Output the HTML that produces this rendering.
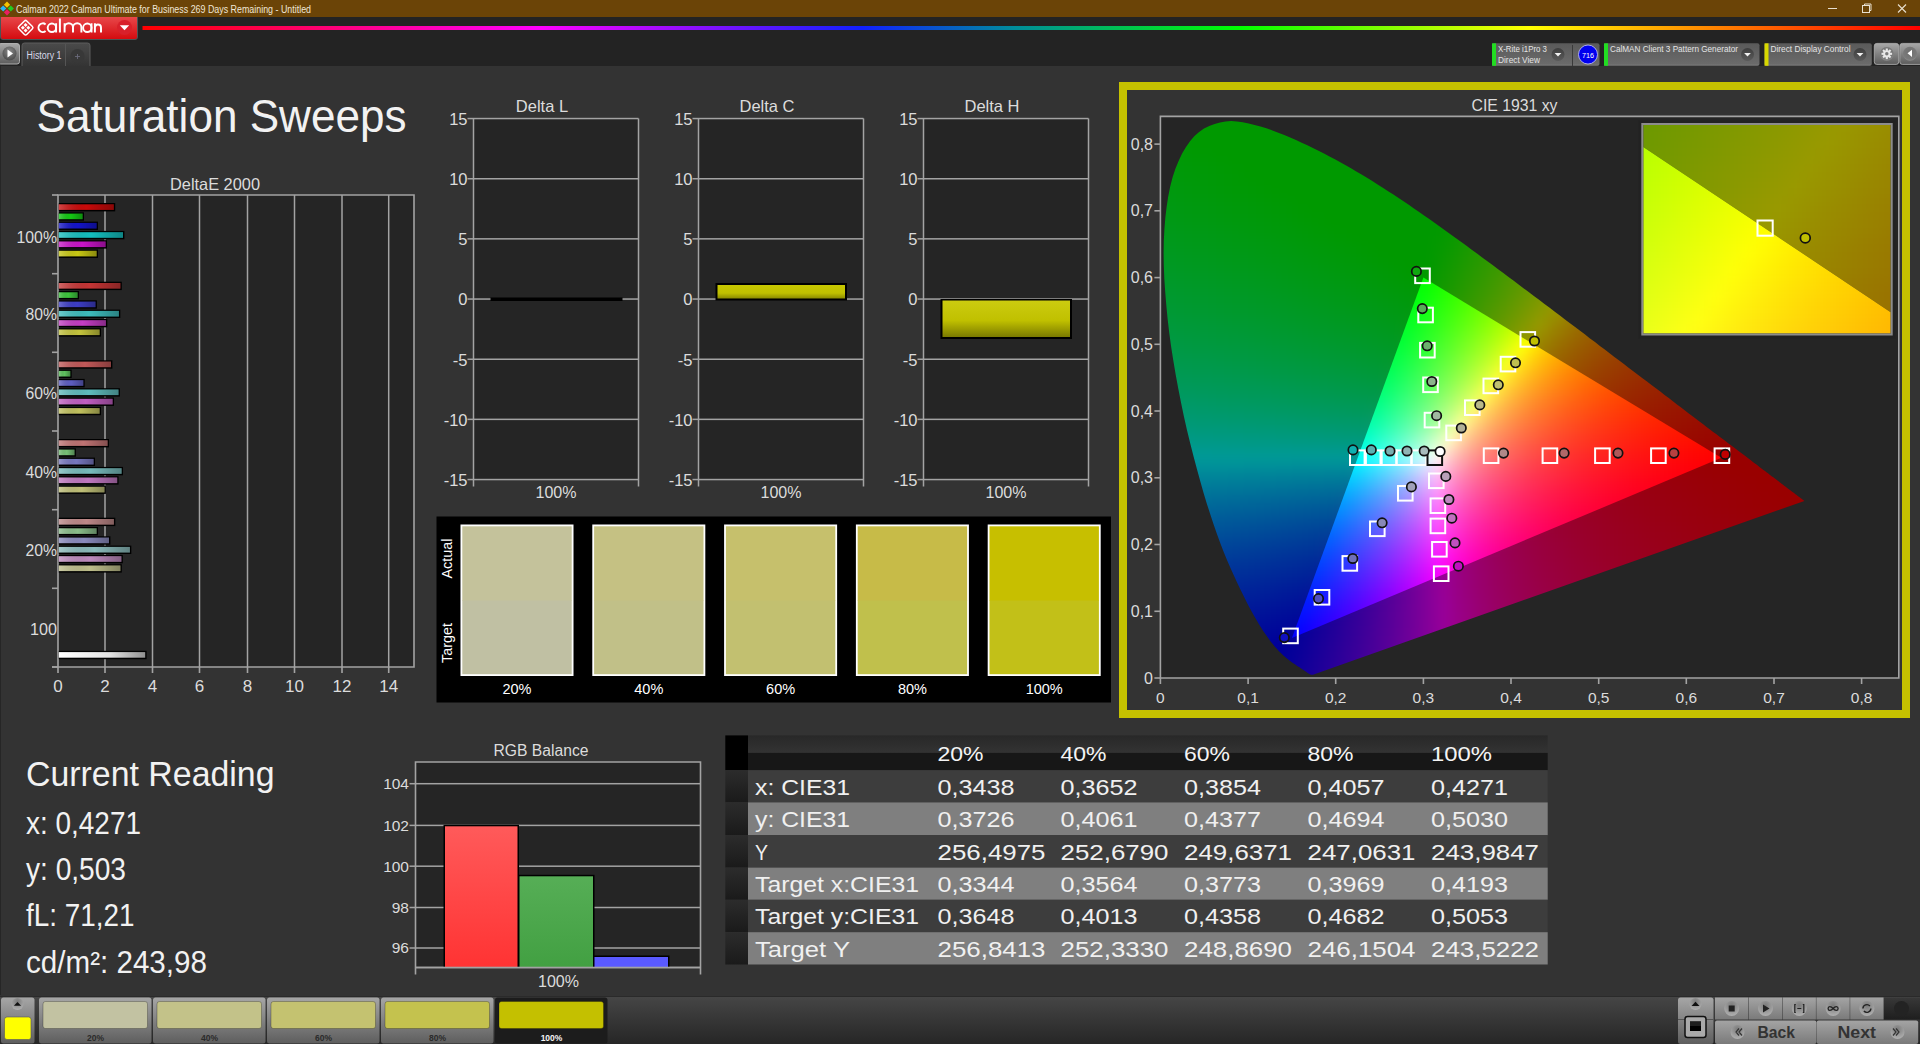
<!DOCTYPE html><html><head><meta charset="utf-8"><style>
html,body{margin:0;padding:0;width:1920px;height:1044px;overflow:hidden;background:#333;}
svg{position:absolute;left:0;top:0;font-family:"Liberation Sans",sans-serif;}
.cl{position:absolute;left:0;top:0;width:1920px;height:1044px;}
.bl{position:absolute;left:0;top:0;width:1920px;height:1044px;}
.bl i{position:absolute;display:block;}
</style></head><body>
<svg width="1920" height="1044" viewBox="0 0 1920 1044">
<defs>
<linearGradient id="redbtn" x1="0" y1="0" x2="0" y2="1"><stop offset="0" stop-color="#e8474a"/><stop offset="1" stop-color="#d40a0e"/></linearGradient>
<linearGradient id="rainbow" x1="0" y1="0" x2="1" y2="0">
<stop offset="0" stop-color="#ff0000"/><stop offset="0.223" stop-color="#ff00ff"/><stop offset="0.405" stop-color="#1020ff"/>
<stop offset="0.49" stop-color="#008c9c"/><stop offset="0.617" stop-color="#00ff00"/><stop offset="0.78" stop-color="#ffff00"/>
<stop offset="0.88" stop-color="#ff8800"/><stop offset="1" stop-color="#ff0000"/></linearGradient>
<linearGradient id="graybtn" x1="0" y1="0" x2="0" y2="1"><stop offset="0" stop-color="#a8a8a8"/><stop offset="1" stop-color="#5c5c5c"/></linearGradient>
<linearGradient id="selg" x1="0" y1="0" x2="0" y2="1"><stop offset="0" stop-color="#5a5a5a"/><stop offset="0.9" stop-color="#6a6a6a"/><stop offset="1" stop-color="#7a7a7a"/></linearGradient>
<radialGradient id="circ" cx="0.5" cy="0.35" r="0.6"><stop offset="0" stop-color="#8a8a8a"/><stop offset="1" stop-color="#505050"/></radialGradient>
<radialGradient id="circ3" cx="0.5" cy="0.4" r="0.6"><stop offset="0" stop-color="#6e6e6e"/><stop offset="0.8" stop-color="#7a7a7a"/><stop offset="1" stop-color="#8e8e8e"/></radialGradient>
<linearGradient id="tabg" x1="0" y1="0" x2="0" y2="1"><stop offset="0" stop-color="#4a4a4a"/><stop offset="1" stop-color="#343434"/></linearGradient>
<linearGradient id="ddg" x1="0" y1="0" x2="0" y2="1"><stop offset="0" stop-color="#3e3e3e"/><stop offset="1" stop-color="#5a5a5a"/></linearGradient>
<linearGradient id="barshade" x1="0" y1="0" x2="1" y2="0"><stop offset="0" stop-color="#fff" stop-opacity="0.25"/><stop offset="0.5" stop-color="#000" stop-opacity="0"/><stop offset="1" stop-color="#000" stop-opacity="0.3"/></linearGradient>
<linearGradient id="vshade" x1="0" y1="0" x2="0" y2="1"><stop offset="0" stop-color="#fff" stop-opacity="0.05"/><stop offset="0.6" stop-color="#000" stop-opacity="0"/><stop offset="1" stop-color="#000" stop-opacity="0.35"/></linearGradient>
</defs>
<defs>
<linearGradient id="whitebar" x1="0" y1="0" x2="1" y2="0"><stop offset="0" stop-color="#ffffff"/><stop offset="0.6" stop-color="#e0e0e0"/><stop offset="1" stop-color="#909090"/></linearGradient>
<linearGradient id="ybar" x1="0" y1="0" x2="0" y2="1"><stop offset="0" stop-color="#c8c800"/><stop offset="0.6" stop-color="#c0c000"/><stop offset="1" stop-color="#8a8a00"/></linearGradient>
<linearGradient id="ybar2" x1="0" y1="0" x2="0" y2="1"><stop offset="0" stop-color="#cccc10"/><stop offset="0.55" stop-color="#c0c000"/><stop offset="1" stop-color="#7a7a00"/></linearGradient>
</defs>
<defs>
<linearGradient id="rbar" x1="0" y1="0" x2="0" y2="1"><stop offset="0" stop-color="#ff5a5a"/><stop offset="1" stop-color="#ff3333"/></linearGradient>
<linearGradient id="gbar" x1="0" y1="0" x2="0" y2="1"><stop offset="0" stop-color="#56ae56"/><stop offset="1" stop-color="#42a042"/></linearGradient>
<linearGradient id="thead" x1="0" y1="0" x2="0" y2="1"><stop offset="0" stop-color="#282828"/><stop offset="1" stop-color="#333"/></linearGradient>
<linearGradient id="tleft" x1="0" y1="0" x2="0" y2="1"><stop offset="0" stop-color="#2c2c2c"/><stop offset="1" stop-color="#1a1a1a"/></linearGradient>
<linearGradient id="tbbg" x1="0" y1="0" x2="0" y2="1"><stop offset="0" stop-color="#464646"/><stop offset="1" stop-color="#262626"/></linearGradient>
<linearGradient id="tbbtn" x1="0" y1="0" x2="0" y2="1"><stop offset="0" stop-color="#a6a6a6"/><stop offset="1" stop-color="#5e5e5e"/></linearGradient>
<linearGradient id="tbbtn2" x1="0" y1="0" x2="0" y2="1"><stop offset="0" stop-color="#a4a4a4"/><stop offset="1" stop-color="#7a7a7a"/></linearGradient>
<linearGradient id="tbdark" x1="0" y1="0" x2="1" y2="0"><stop offset="0" stop-color="#262626"/><stop offset="1" stop-color="#3a3a3a"/></linearGradient>
<linearGradient id="darkr" x1="0" y1="0" x2="0" y2="1"><stop offset="0" stop-color="#383838"/><stop offset="1" stop-color="#1e1e1e"/></linearGradient>
<radialGradient id="circ2" cx="0.5" cy="0.3" r="0.7"><stop offset="0" stop-color="#7a7a7a"/><stop offset="1" stop-color="#b0b0b0"/></radialGradient>
</defs>
<rect x="0" y="66" width="1920" height="929" fill="#333333"/><rect x="0" y="66" width="1" height="929" fill="#262626"/>
<rect x="0" y="0" width="1920" height="17" fill="#6b4407"/>
<g transform="translate(7,8.5)"><rect x="-2.2" y="-6" width="4.4" height="4.4" fill="#f5c400" transform="rotate(45 0 -3.8)"/><rect x="-6" y="-2.2" width="4.4" height="4.4" fill="#29b6f6" transform="rotate(45 -3.8 0)"/><rect x="1.6" y="-2.2" width="4.4" height="4.4" fill="#22cc22" transform="rotate(45 3.8 0)"/><rect x="-2.2" y="1.6" width="4.4" height="4.4" fill="#e91e63" transform="rotate(45 0 3.8)"/></g>
<text x="16" y="12.5" font-size="10" fill="#efe6d6" text-anchor="start" textLength="295" lengthAdjust="spacingAndGlyphs">Calman 2022 Calman Ultimate for Business 269 Days Remaining  - Untitled</text>
<rect x="1828" y="8" width="9" height="1" fill="#e8e0d0"/>
<rect x="1862.5" y="5.5" width="7" height="7" fill="none" stroke="#e8e0d0" stroke-width="1"/><path d="M1864.5 5.5v-1.5h6.5v6.5h-1.5" fill="none" stroke="#e8e0d0" stroke-width="1"/>
<path d="M1898 4.5l8 8M1906 4.5l-8 8" stroke="#e8e0d0" stroke-width="1.1"/>
<rect x="0" y="17" width="1920" height="49" fill="#232323"/>
<path d="M0.5 17H137.5V37a2.5 2.5 0 0 1-2.5 2.5H3a2.5 2.5 0 0 1-2.5-2.5Z" fill="url(#redbtn)"/><path d="M137.5 17V37a2.5 2.5 0 0 1-2.5 2.5H3a2.5 2.5 0 0 1-2.5-2.5V17" fill="none" stroke="#4b5456" stroke-width="1"/>
<g transform="translate(25.6,27.7) rotate(45)" fill="none" stroke="#fff" stroke-width="1.5"><rect x="-5.6" y="-5.6" width="11.2" height="11.2" rx="1.6"/></g>
<g transform="translate(25.6,27.7) rotate(45)" fill="#fff"><rect x="-3.4" y="-3.4" width="2.9" height="2.9"/><rect x="0.5" y="-3.4" width="2.9" height="2.9"/><rect x="-3.4" y="0.5" width="2.9" height="2.9"/><rect x="0.5" y="0.5" width="2.9" height="2.9"/></g>
<g fill="none" stroke="#fff" stroke-width="1.95"><path d="M45.6 24.4A4.3 4.3 0 1 0 45.6 30.9M56.1 23.2V32.6M59.9 18.4V32.6M64.6 32.6V23.2M64.6 27.4A4.2 4.2 0 0 1 73 27.4V32.6M73 27.4A4.2 4.2 0 0 1 81.4 27.4V32.6M91.5 23.2V32.6M94.9 32.6V23.2M94.9 27.6A3.05 3.05 0 0 1 101 27.6V32.6"/><circle cx="51.9" cy="27.8" r="4.2"/><circle cx="87.3" cy="27.8" r="4.2"/></g>
<circle cx="124.5" cy="27.5" r="7.5" fill="#d8202a"/><path d="M119.8 25.2h9.4l-4.7 5z" fill="#fff"/>
<rect x="142.5" y="26" width="1777.5" height="4" fill="url(#rainbow)"/>
<rect x="-2" y="43.5" width="21.5" height="20.5" rx="2.5" fill="url(#graybtn)" stroke="#b8b8b8" stroke-width="0.9"/>
<circle cx="9.5" cy="53.5" r="7" fill="url(#circ)"/><path d="M7.5 49.5v8l5.5-4z" fill="#fff"/>
<path d="M22 66v-20.5a2.5 2.5 0 0 1 2.5-2.5h63a2.5 2.5 0 0 1 2.5 2.5v20.5" fill="url(#tabg)" stroke="#5c5c5c" stroke-width="1"/>
<rect x="65" y="44" width="1" height="22" fill="#555"/>
<text x="26.5" y="59" font-size="10" fill="#d8d8e8" text-anchor="start" textLength="35" lengthAdjust="spacingAndGlyphs">History 1</text>
<circle cx="77.5" cy="56" r="7" fill="#383838"/><path d="M75 56.5h5M77.5 54v5" stroke="#6a6a7a" stroke-width="0.9"/>
<rect x="1492" y="43.3" width="107.5" height="22.5" rx="2" fill="url(#selg)"/><rect x="1492" y="43.3" width="4" height="22.5" fill="#22dd22"/><text x="1498" y="52.0" font-size="9" fill="#e4e4e4" text-anchor="start" textLength="49" lengthAdjust="spacingAndGlyphs">X-Rite i1Pro 3</text><text x="1498" y="62.5" font-size="9" fill="#e4e4e4" text-anchor="start" textLength="42" lengthAdjust="spacingAndGlyphs">Direct View</text><circle cx="1558" cy="54.5" r="6.5" fill="url(#ddg)"/><path d="M1554.6 53h6.8l-3.4 3.6z" fill="#f0f0f0"/>
<rect x="1572" y="45" width="1" height="21" fill="#3a3a3a"/>
<circle cx="1588" cy="54.5" r="9.5" fill="#0000ee" stroke="#c8c8ff" stroke-width="0.8"/>
<text x="1588" y="58" font-size="8" fill="#ffffff" text-anchor="middle" textLength="12" lengthAdjust="spacingAndGlyphs">716</text>
<rect x="1604" y="43.3" width="155.5" height="22.5" rx="2" fill="url(#selg)"/><rect x="1604" y="43.3" width="4" height="22.5" fill="#22dd22"/><text x="1610" y="52.0" font-size="9" fill="#e4e4e4" text-anchor="start" textLength="128" lengthAdjust="spacingAndGlyphs">CalMAN Client 3 Pattern Generator</text><circle cx="1747.5" cy="54.5" r="6.5" fill="url(#ddg)"/><path d="M1744.1 53h6.8l-3.4 3.6z" fill="#f0f0f0"/>
<rect x="1764.5" y="43.3" width="107.29999999999995" height="22.5" rx="2" fill="url(#selg)"/><rect x="1764.5" y="43.3" width="4" height="22.5" fill="#d8d800"/><text x="1770.5" y="52.0" font-size="9" fill="#e4e4e4" text-anchor="start" textLength="80" lengthAdjust="spacingAndGlyphs">Direct Display Control</text><circle cx="1860" cy="54.5" r="6.5" fill="url(#ddg)"/><path d="M1856.6 53h6.8l-3.4 3.6z" fill="#f0f0f0"/>
<rect x="1874.3" y="43.4" width="24.4" height="21" rx="2.5" fill="url(#graybtn)" stroke="#b4b4b4" stroke-width="0.8"/>
<circle cx="1886.8" cy="53.8" r="6.9" fill="url(#circ3)"/>
<g transform="translate(1886.8,53.8)" fill="#e8e8e8"><circle r="3.6"/><rect x="-1.05" y="-5.3" width="2.1" height="2.4" transform="rotate(0)"/><rect x="-1.05" y="-5.3" width="2.1" height="2.4" transform="rotate(45)"/><rect x="-1.05" y="-5.3" width="2.1" height="2.4" transform="rotate(90)"/><rect x="-1.05" y="-5.3" width="2.1" height="2.4" transform="rotate(135)"/><rect x="-1.05" y="-5.3" width="2.1" height="2.4" transform="rotate(180)"/><rect x="-1.05" y="-5.3" width="2.1" height="2.4" transform="rotate(225)"/><rect x="-1.05" y="-5.3" width="2.1" height="2.4" transform="rotate(270)"/><rect x="-1.05" y="-5.3" width="2.1" height="2.4" transform="rotate(315)"/><circle r="1.7" fill="#7a7a7a"/></g>
<rect x="1899.8" y="43.4" width="24.4" height="21" rx="2.5" fill="url(#graybtn)" stroke="#b4b4b4" stroke-width="0.8"/>
<circle cx="1910" cy="53.8" r="7" fill="url(#circ3)"/><path d="M1912 49.7v7.3l-4.5-3.8z" fill="#fff"/>
<text x="36.5" y="132" font-size="46.5" fill="#f2f2f2" text-anchor="start" textLength="370" lengthAdjust="spacingAndGlyphs">Saturation Sweeps</text>
<text x="215" y="189.5" font-size="16.5" fill="#dcdcdc" text-anchor="middle" textLength="90" lengthAdjust="spacingAndGlyphs">DeltaE 2000</text>
<rect x="58" y="195" width="356" height="472" fill="#252525"/>
<rect x="104.25" y="195" width="1.5" height="472" fill="#a3a3a3"/>
<rect x="151.75" y="195" width="1.5" height="472" fill="#a3a3a3"/>
<rect x="198.75" y="195" width="1.5" height="472" fill="#a3a3a3"/>
<rect x="246.75" y="195" width="1.5" height="472" fill="#a3a3a3"/>
<rect x="293.75" y="195" width="1.5" height="472" fill="#a3a3a3"/>
<rect x="341.25" y="195" width="1.5" height="472" fill="#a3a3a3"/>
<rect x="387.95" y="195" width="1.5" height="472" fill="#a3a3a3"/>
<path d="M58 667V195H414V667H52" fill="none" stroke="#a3a3a3" stroke-width="1.6"/>
<rect x="52" y="194.2" width="6" height="1.6" fill="#a3a3a3"/>
<rect x="52" y="272.9" width="6" height="1.6" fill="#a3a3a3"/>
<rect x="52" y="351.5" width="6" height="1.6" fill="#a3a3a3"/>
<rect x="52" y="430.2" width="6" height="1.6" fill="#a3a3a3"/>
<rect x="52" y="508.9" width="6" height="1.6" fill="#a3a3a3"/>
<rect x="52" y="587.5" width="6" height="1.6" fill="#a3a3a3"/>
<rect x="52" y="666.2" width="6" height="1.6" fill="#a3a3a3"/>
<rect x="57.2" y="667" width="1.6" height="6" fill="#a3a3a3"/>
<text x="58" y="692" font-size="17" fill="#dcdcdc" text-anchor="middle">0</text>
<rect x="104.2" y="667" width="1.6" height="6" fill="#a3a3a3"/>
<text x="105" y="692" font-size="17" fill="#dcdcdc" text-anchor="middle">2</text>
<rect x="151.7" y="667" width="1.6" height="6" fill="#a3a3a3"/>
<text x="152.5" y="692" font-size="17" fill="#dcdcdc" text-anchor="middle">4</text>
<rect x="198.7" y="667" width="1.6" height="6" fill="#a3a3a3"/>
<text x="199.5" y="692" font-size="17" fill="#dcdcdc" text-anchor="middle">6</text>
<rect x="246.7" y="667" width="1.6" height="6" fill="#a3a3a3"/>
<text x="247.5" y="692" font-size="17" fill="#dcdcdc" text-anchor="middle">8</text>
<rect x="293.7" y="667" width="1.6" height="6" fill="#a3a3a3"/>
<text x="294.5" y="692" font-size="17" fill="#dcdcdc" text-anchor="middle">10</text>
<rect x="341.2" y="667" width="1.6" height="6" fill="#a3a3a3"/>
<text x="342" y="692" font-size="17" fill="#dcdcdc" text-anchor="middle">12</text>
<rect x="387.9" y="667" width="1.6" height="6" fill="#a3a3a3"/>
<text x="388.7" y="692" font-size="17" fill="#dcdcdc" text-anchor="middle">14</text>
<text x="57" y="242.5" font-size="16.7" fill="#dcdcdc" text-anchor="end" textLength="40.5" lengthAdjust="spacingAndGlyphs">100%</text>
<text x="57" y="320" font-size="16.7" fill="#dcdcdc" text-anchor="end" textLength="31.5" lengthAdjust="spacingAndGlyphs">80%</text>
<text x="57" y="399" font-size="16.7" fill="#dcdcdc" text-anchor="end" textLength="31.5" lengthAdjust="spacingAndGlyphs">60%</text>
<text x="57" y="478" font-size="16.7" fill="#dcdcdc" text-anchor="end" textLength="31.5" lengthAdjust="spacingAndGlyphs">40%</text>
<text x="57" y="556" font-size="16.7" fill="#dcdcdc" text-anchor="end" textLength="31.5" lengthAdjust="spacingAndGlyphs">20%</text>
<text x="57" y="635" font-size="16.7" fill="#dcdcdc" text-anchor="end" textLength="27" lengthAdjust="spacingAndGlyphs">100</text>
<rect x="58.8" y="203.0" width="56.4" height="8.4" fill="#000"/>
<rect x="58.8" y="204.3" width="55.0" height="5.6" fill="rgb(200, 10, 10)"/>
<rect x="58.8" y="204.3" width="55.0" height="5.6" fill="url(#barshade)"/>
<rect x="58.8" y="212.3" width="25.2" height="8.4" fill="#000"/>
<rect x="58.8" y="213.6" width="23.8" height="5.6" fill="rgb(20, 200, 20)"/>
<rect x="58.8" y="213.6" width="23.8" height="5.6" fill="url(#barshade)"/>
<rect x="58.8" y="221.6" width="39.2" height="8.4" fill="#000"/>
<rect x="58.8" y="222.9" width="37.8" height="5.6" fill="rgb(20, 20, 200)"/>
<rect x="58.8" y="222.9" width="37.8" height="5.6" fill="url(#barshade)"/>
<rect x="58.8" y="230.9" width="65.6" height="8.4" fill="#000"/>
<rect x="58.8" y="232.2" width="64.2" height="5.6" fill="rgb(20, 190, 190)"/>
<rect x="58.8" y="232.2" width="64.2" height="5.6" fill="url(#barshade)"/>
<rect x="58.8" y="240.2" width="48.2" height="8.4" fill="#000"/>
<rect x="58.8" y="241.5" width="46.8" height="5.6" fill="rgb(200, 20, 200)"/>
<rect x="58.8" y="241.5" width="46.8" height="5.6" fill="url(#barshade)"/>
<rect x="58.8" y="249.5" width="39.2" height="8.4" fill="#000"/>
<rect x="58.8" y="250.8" width="37.8" height="5.6" fill="rgb(200, 200, 20)"/>
<rect x="58.8" y="250.8" width="37.8" height="5.6" fill="url(#barshade)"/>
<rect x="58.8" y="281.7" width="63.0" height="8.4" fill="#000"/>
<rect x="58.8" y="283.0" width="61.6" height="5.6" fill="rgb(196, 53, 53)"/>
<rect x="58.8" y="283.0" width="61.6" height="5.6" fill="url(#barshade)"/>
<rect x="58.8" y="291.0" width="20.2" height="8.4" fill="#000"/>
<rect x="58.8" y="292.3" width="18.8" height="5.6" fill="rgb(61, 196, 61)"/>
<rect x="58.8" y="292.3" width="18.8" height="5.6" fill="url(#barshade)"/>
<rect x="58.8" y="300.3" width="38.1" height="8.4" fill="#000"/>
<rect x="58.8" y="301.6" width="36.7" height="5.6" fill="rgb(61, 61, 196)"/>
<rect x="58.8" y="301.6" width="36.7" height="5.6" fill="url(#barshade)"/>
<rect x="58.8" y="309.6" width="61.5" height="8.4" fill="#000"/>
<rect x="58.8" y="310.9" width="60.1" height="5.6" fill="rgb(61, 188, 188)"/>
<rect x="58.8" y="310.9" width="60.1" height="5.6" fill="url(#barshade)"/>
<rect x="58.8" y="318.9" width="48.5" height="8.4" fill="#000"/>
<rect x="58.8" y="320.2" width="47.1" height="5.6" fill="rgb(196, 61, 196)"/>
<rect x="58.8" y="320.2" width="47.1" height="5.6" fill="url(#barshade)"/>
<rect x="58.8" y="328.2" width="42.2" height="8.4" fill="#000"/>
<rect x="58.8" y="329.5" width="40.8" height="5.6" fill="rgb(196, 196, 61)"/>
<rect x="58.8" y="329.5" width="40.8" height="5.6" fill="url(#barshade)"/>
<rect x="58.8" y="360.3" width="53.6" height="8.4" fill="#000"/>
<rect x="58.8" y="361.6" width="52.2" height="5.6" fill="rgb(193, 88, 88)"/>
<rect x="58.8" y="361.6" width="52.2" height="5.6" fill="url(#barshade)"/>
<rect x="58.8" y="369.6" width="12.9" height="8.4" fill="#000"/>
<rect x="58.8" y="370.9" width="11.5" height="5.6" fill="rgb(94, 193, 94)"/>
<rect x="58.8" y="370.9" width="11.5" height="5.6" fill="url(#barshade)"/>
<rect x="58.8" y="378.9" width="25.9" height="8.4" fill="#000"/>
<rect x="58.8" y="380.2" width="24.5" height="5.6" fill="rgb(94, 94, 193)"/>
<rect x="58.8" y="380.2" width="24.5" height="5.6" fill="url(#barshade)"/>
<rect x="58.8" y="388.2" width="61.1" height="8.4" fill="#000"/>
<rect x="58.8" y="389.5" width="59.7" height="5.6" fill="rgb(94, 187, 187)"/>
<rect x="58.8" y="389.5" width="59.7" height="5.6" fill="url(#barshade)"/>
<rect x="58.8" y="397.5" width="55.2" height="8.4" fill="#000"/>
<rect x="58.8" y="398.8" width="53.8" height="5.6" fill="rgb(193, 94, 193)"/>
<rect x="58.8" y="398.8" width="53.8" height="5.6" fill="url(#barshade)"/>
<rect x="58.8" y="406.8" width="42.2" height="8.4" fill="#000"/>
<rect x="58.8" y="408.1" width="40.8" height="5.6" fill="rgb(193, 193, 94)"/>
<rect x="58.8" y="408.1" width="40.8" height="5.6" fill="url(#barshade)"/>
<rect x="58.8" y="439.0" width="50.2" height="8.4" fill="#000"/>
<rect x="58.8" y="440.3" width="48.8" height="5.6" fill="rgb(191, 115, 115)"/>
<rect x="58.8" y="440.3" width="48.8" height="5.6" fill="url(#barshade)"/>
<rect x="58.8" y="448.3" width="17.1" height="8.4" fill="#000"/>
<rect x="58.8" y="449.6" width="15.7" height="5.6" fill="rgb(119, 191, 119)"/>
<rect x="58.8" y="449.6" width="15.7" height="5.6" fill="url(#barshade)"/>
<rect x="58.8" y="457.6" width="36.2" height="8.4" fill="#000"/>
<rect x="58.8" y="458.9" width="34.8" height="5.6" fill="rgb(119, 119, 191)"/>
<rect x="58.8" y="458.9" width="34.8" height="5.6" fill="url(#barshade)"/>
<rect x="58.8" y="466.9" width="64.2" height="8.4" fill="#000"/>
<rect x="58.8" y="468.2" width="62.8" height="5.6" fill="rgb(119, 187, 187)"/>
<rect x="58.8" y="468.2" width="62.8" height="5.6" fill="url(#barshade)"/>
<rect x="58.8" y="476.2" width="59.8" height="8.4" fill="#000"/>
<rect x="58.8" y="477.5" width="58.4" height="5.6" fill="rgb(191, 119, 191)"/>
<rect x="58.8" y="477.5" width="58.4" height="5.6" fill="url(#barshade)"/>
<rect x="58.8" y="485.5" width="47.1" height="8.4" fill="#000"/>
<rect x="58.8" y="486.8" width="45.7" height="5.6" fill="rgb(191, 191, 119)"/>
<rect x="58.8" y="486.8" width="45.7" height="5.6" fill="url(#barshade)"/>
<rect x="58.8" y="517.7" width="56.5" height="8.4" fill="#000"/>
<rect x="58.8" y="519.0" width="55.1" height="5.6" fill="rgb(189, 136, 136)"/>
<rect x="58.8" y="519.0" width="55.1" height="5.6" fill="url(#barshade)"/>
<rect x="58.8" y="527.0" width="39.2" height="8.4" fill="#000"/>
<rect x="58.8" y="528.3" width="37.8" height="5.6" fill="rgb(138, 189, 138)"/>
<rect x="58.8" y="528.3" width="37.8" height="5.6" fill="url(#barshade)"/>
<rect x="58.8" y="536.3" width="51.6" height="8.4" fill="#000"/>
<rect x="58.8" y="537.6" width="50.2" height="5.6" fill="rgb(138, 138, 189)"/>
<rect x="58.8" y="537.6" width="50.2" height="5.6" fill="url(#barshade)"/>
<rect x="58.8" y="545.6" width="72.5" height="8.4" fill="#000"/>
<rect x="58.8" y="546.9" width="71.1" height="5.6" fill="rgb(138, 186, 186)"/>
<rect x="58.8" y="546.9" width="71.1" height="5.6" fill="url(#barshade)"/>
<rect x="58.8" y="554.9" width="64.0" height="8.4" fill="#000"/>
<rect x="58.8" y="556.2" width="62.6" height="5.6" fill="rgb(189, 138, 189)"/>
<rect x="58.8" y="556.2" width="62.6" height="5.6" fill="url(#barshade)"/>
<rect x="58.8" y="564.2" width="63.0" height="8.4" fill="#000"/>
<rect x="58.8" y="565.5" width="61.6" height="5.6" fill="rgb(189, 189, 138)"/>
<rect x="58.8" y="565.5" width="61.6" height="5.6" fill="url(#barshade)"/>
<rect x="58.8" y="650.8" width="87.8" height="8.4" fill="#000"/>
<rect x="58.8" y="652.1" width="86.4" height="5.6" fill="url(#whitebar)"/>
<text x="542.0" y="111.5" font-size="16.5" fill="#dcdcdc" text-anchor="middle">Delta L</text>
<rect x="473.5" y="118.5" width="165.0" height="361.0" fill="#252525"/>
<rect x="467.5" y="117.8" width="171.0" height="1.5" fill="#a3a3a3"/>
<text x="467.5" y="124.8" font-size="16.5" fill="#dcdcdc" text-anchor="end">15</text>
<rect x="467.5" y="178.0" width="171.0" height="1.5" fill="#a3a3a3"/>
<text x="467.5" y="185.0" font-size="16.5" fill="#dcdcdc" text-anchor="end">10</text>
<rect x="467.5" y="238.1" width="171.0" height="1.5" fill="#a3a3a3"/>
<text x="467.5" y="245.1" font-size="16.5" fill="#dcdcdc" text-anchor="end">5</text>
<rect x="467.5" y="298.3" width="171.0" height="1.5" fill="#a3a3a3"/>
<text x="467.5" y="305.3" font-size="16.5" fill="#dcdcdc" text-anchor="end">0</text>
<rect x="467.5" y="358.5" width="171.0" height="1.5" fill="#a3a3a3"/>
<text x="467.5" y="365.5" font-size="16.5" fill="#dcdcdc" text-anchor="end">-5</text>
<rect x="467.5" y="418.6" width="171.0" height="1.5" fill="#a3a3a3"/>
<text x="467.5" y="425.6" font-size="16.5" fill="#dcdcdc" text-anchor="end">-10</text>
<rect x="467.5" y="478.8" width="171.0" height="1.5" fill="#a3a3a3"/>
<text x="467.5" y="485.8" font-size="16.5" fill="#dcdcdc" text-anchor="end">-15</text>
<rect x="472.75" y="118.5" width="1.5" height="368.0" fill="#a3a3a3"/>
<rect x="637.75" y="118.5" width="1.5" height="368.0" fill="#a3a3a3"/>
<text x="556.0" y="498" font-size="16.5" fill="#dcdcdc" text-anchor="middle" textLength="41" lengthAdjust="spacingAndGlyphs">100%</text>
<rect x="490.5" y="297.5" width="132" height="3.5" fill="#000"/>
<text x="767.0" y="111.5" font-size="16.5" fill="#dcdcdc" text-anchor="middle">Delta C</text>
<rect x="698.5" y="118.5" width="165.0" height="361.0" fill="#252525"/>
<rect x="692.5" y="117.8" width="171.0" height="1.5" fill="#a3a3a3"/>
<text x="692.5" y="124.8" font-size="16.5" fill="#dcdcdc" text-anchor="end">15</text>
<rect x="692.5" y="178.0" width="171.0" height="1.5" fill="#a3a3a3"/>
<text x="692.5" y="185.0" font-size="16.5" fill="#dcdcdc" text-anchor="end">10</text>
<rect x="692.5" y="238.1" width="171.0" height="1.5" fill="#a3a3a3"/>
<text x="692.5" y="245.1" font-size="16.5" fill="#dcdcdc" text-anchor="end">5</text>
<rect x="692.5" y="298.3" width="171.0" height="1.5" fill="#a3a3a3"/>
<text x="692.5" y="305.3" font-size="16.5" fill="#dcdcdc" text-anchor="end">0</text>
<rect x="692.5" y="358.5" width="171.0" height="1.5" fill="#a3a3a3"/>
<text x="692.5" y="365.5" font-size="16.5" fill="#dcdcdc" text-anchor="end">-5</text>
<rect x="692.5" y="418.6" width="171.0" height="1.5" fill="#a3a3a3"/>
<text x="692.5" y="425.6" font-size="16.5" fill="#dcdcdc" text-anchor="end">-10</text>
<rect x="692.5" y="478.8" width="171.0" height="1.5" fill="#a3a3a3"/>
<text x="692.5" y="485.8" font-size="16.5" fill="#dcdcdc" text-anchor="end">-15</text>
<rect x="697.75" y="118.5" width="1.5" height="368.0" fill="#a3a3a3"/>
<rect x="862.75" y="118.5" width="1.5" height="368.0" fill="#a3a3a3"/>
<text x="781.0" y="498" font-size="16.5" fill="#dcdcdc" text-anchor="middle" textLength="41" lengthAdjust="spacingAndGlyphs">100%</text>
<rect x="715.5" y="283" width="131.5" height="17.5" fill="#000"/><rect x="717.5" y="285" width="127.5" height="13.5" fill="url(#ybar)"/>
<text x="992.0" y="111.5" font-size="16.5" fill="#dcdcdc" text-anchor="middle">Delta H</text>
<rect x="923.5" y="118.5" width="165.0" height="361.0" fill="#252525"/>
<rect x="917.5" y="117.8" width="171.0" height="1.5" fill="#a3a3a3"/>
<text x="917.5" y="124.8" font-size="16.5" fill="#dcdcdc" text-anchor="end">15</text>
<rect x="917.5" y="178.0" width="171.0" height="1.5" fill="#a3a3a3"/>
<text x="917.5" y="185.0" font-size="16.5" fill="#dcdcdc" text-anchor="end">10</text>
<rect x="917.5" y="238.1" width="171.0" height="1.5" fill="#a3a3a3"/>
<text x="917.5" y="245.1" font-size="16.5" fill="#dcdcdc" text-anchor="end">5</text>
<rect x="917.5" y="298.3" width="171.0" height="1.5" fill="#a3a3a3"/>
<text x="917.5" y="305.3" font-size="16.5" fill="#dcdcdc" text-anchor="end">0</text>
<rect x="917.5" y="358.5" width="171.0" height="1.5" fill="#a3a3a3"/>
<text x="917.5" y="365.5" font-size="16.5" fill="#dcdcdc" text-anchor="end">-5</text>
<rect x="917.5" y="418.6" width="171.0" height="1.5" fill="#a3a3a3"/>
<text x="917.5" y="425.6" font-size="16.5" fill="#dcdcdc" text-anchor="end">-10</text>
<rect x="917.5" y="478.8" width="171.0" height="1.5" fill="#a3a3a3"/>
<text x="917.5" y="485.8" font-size="16.5" fill="#dcdcdc" text-anchor="end">-15</text>
<rect x="922.75" y="118.5" width="1.5" height="368.0" fill="#a3a3a3"/>
<rect x="1087.75" y="118.5" width="1.5" height="368.0" fill="#a3a3a3"/>
<text x="1006.0" y="498" font-size="16.5" fill="#dcdcdc" text-anchor="middle" textLength="41" lengthAdjust="spacingAndGlyphs">100%</text>
<rect x="940.5" y="299" width="131.5" height="40" fill="#000"/><rect x="942.5" y="300.5" width="127.5" height="36.5" fill="url(#ybar2)"/>
<rect x="436.5" y="516.5" width="674.5" height="186" fill="#000"/>
<rect x="460.5" y="524.5" width="113" height="151.5" fill="#fff"/>
<rect x="462.3" y="526.3" width="109.4" height="74.7" fill="#c4c29b"/>
<rect x="462.3" y="600.5" width="109.4" height="73.7" fill="#c0c0a3"/>
<text x="517.0" y="693.5" font-size="14.5" fill="#ffffff" text-anchor="middle">20%</text>
<rect x="592.3" y="524.5" width="113" height="151.5" fill="#fff"/>
<rect x="594.1" y="526.3" width="109.4" height="74.7" fill="#c5c183"/>
<rect x="594.1" y="600.5" width="109.4" height="73.7" fill="#c1c088"/>
<text x="648.8" y="693.5" font-size="14.5" fill="#ffffff" text-anchor="middle">40%</text>
<rect x="724.1" y="524.5" width="113" height="151.5" fill="#fff"/>
<rect x="725.9" y="526.3" width="109.4" height="74.7" fill="#c6c06c"/>
<rect x="725.9" y="600.5" width="109.4" height="73.7" fill="#c2c070"/>
<text x="780.6" y="693.5" font-size="14.5" fill="#ffffff" text-anchor="middle">60%</text>
<rect x="855.9" y="524.5" width="113" height="151.5" fill="#fff"/>
<rect x="857.7" y="526.3" width="109.4" height="74.7" fill="#c7bb48"/>
<rect x="857.7" y="600.5" width="109.4" height="73.7" fill="#c0c04c"/>
<text x="912.4" y="693.5" font-size="14.5" fill="#ffffff" text-anchor="middle">80%</text>
<rect x="987.7" y="524.5" width="113" height="151.5" fill="#fff"/>
<rect x="989.5" y="526.3" width="109.4" height="74.7" fill="#c7bf00"/>
<rect x="989.5" y="600.5" width="109.4" height="73.7" fill="#c2c018"/>
<text x="1044.2" y="693.5" font-size="14.5" fill="#ffffff" text-anchor="middle">100%</text>
<text transform="translate(452,558.5) rotate(-90)" font-size="14" fill="#fff" text-anchor="middle" textLength="40" lengthAdjust="spacingAndGlyphs">Actual</text>
<text transform="translate(452,643) rotate(-90)" font-size="14" fill="#fff" text-anchor="middle" textLength="40" lengthAdjust="spacingAndGlyphs">Target</text>
<rect x="1123" y="86" width="783" height="628" fill="#333333" stroke="#c5c100" stroke-width="8"/>
<text x="1514.5" y="110.8" font-size="16.5" fill="#dcdcdc" text-anchor="middle" textLength="86" lengthAdjust="spacingAndGlyphs">CIE 1931 xy</text>
<rect x="1160.4" y="116.4" width="738.4" height="561.6" fill="#252525"/>
<text x="26" y="785.5" font-size="35.5" fill="#f2f2f2" text-anchor="start" textLength="248.5" lengthAdjust="spacingAndGlyphs">Current Reading</text>
<text x="26" y="834" font-size="30.5" fill="#f2f2f2" text-anchor="start" textLength="115" lengthAdjust="spacingAndGlyphs">x: 0,4271</text>
<text x="26" y="880" font-size="30.5" fill="#f2f2f2" text-anchor="start" textLength="100" lengthAdjust="spacingAndGlyphs">y: 0,503</text>
<text x="26" y="926" font-size="30.5" fill="#f2f2f2" text-anchor="start" textLength="108.5" lengthAdjust="spacingAndGlyphs">fL: 71,21</text>
<text x="26" y="972.5" font-size="30.5" fill="#f2f2f2" text-anchor="start" textLength="181" lengthAdjust="spacingAndGlyphs">cd/m²: 243,98</text>
<text x="541" y="755.5" font-size="16" fill="#dcdcdc" text-anchor="middle" textLength="95" lengthAdjust="spacingAndGlyphs">RGB Balance</text>
<rect x="415.5" y="762" width="285.0" height="205.5" fill="#252525"/>
<rect x="409.5" y="782.95" width="291.0" height="1.5" fill="#a3a3a3"/>
<text x="409" y="789.0" font-size="15.5" fill="#dcdcdc" text-anchor="end">104</text>
<rect x="409.5" y="824.65" width="291.0" height="1.5" fill="#a3a3a3"/>
<text x="409" y="830.7" font-size="15.5" fill="#dcdcdc" text-anchor="end">102</text>
<rect x="409.5" y="865.45" width="291.0" height="1.5" fill="#a3a3a3"/>
<text x="409" y="871.5" font-size="15.5" fill="#dcdcdc" text-anchor="end">100</text>
<rect x="409.5" y="906.75" width="291.0" height="1.5" fill="#a3a3a3"/>
<text x="409" y="912.8" font-size="15.5" fill="#dcdcdc" text-anchor="end">98</text>
<rect x="409.5" y="947.25" width="291.0" height="1.5" fill="#a3a3a3"/>
<text x="409" y="953.3" font-size="15.5" fill="#dcdcdc" text-anchor="end">96</text>
<path d="M415.5 974.5V762H700.5V974.5M415.5 967.5H700.5" fill="none" stroke="#a3a3a3" stroke-width="1.6"/>
<rect x="443.5" y="824.8" width="75.5" height="142.70000000000005" fill="#000"/><rect x="445" y="826.3" width="72.5" height="141.20000000000005" fill="url(#rbar)"/>
<rect x="518" y="874.8" width="76.5" height="92.70000000000005" fill="#000"/><rect x="519.5" y="876.3" width="73.5" height="91.20000000000005" fill="url(#gbar)"/>
<rect x="593" y="955.5" width="76.5" height="12.0" fill="#000"/><rect x="594.5" y="957" width="73.5" height="10.5" fill="#5a5aff"/>
<rect x="415.5" y="966.7" width="285.0" height="1.6" fill="#a3a3a3"/>
<text x="558.5" y="987" font-size="16.5" fill="#dcdcdc" text-anchor="middle" textLength="41" lengthAdjust="spacingAndGlyphs">100%</text>
<rect x="725.3" y="735.4" width="22.7" height="34.8" fill="#000"/>
<rect x="748" y="735.4" width="799.7" height="17.5" fill="url(#thead)"/>
<rect x="748" y="752.9" width="799.7" height="17.3" fill="#171717"/>
<text x="937.5" y="760.5" font-size="20" fill="#f4f4f4" text-anchor="start" textLength="46" lengthAdjust="spacingAndGlyphs">20%</text>
<text x="1060.5" y="760.5" font-size="20" fill="#f4f4f4" text-anchor="start" textLength="46" lengthAdjust="spacingAndGlyphs">40%</text>
<text x="1184" y="760.5" font-size="20" fill="#f4f4f4" text-anchor="start" textLength="46" lengthAdjust="spacingAndGlyphs">60%</text>
<text x="1307.5" y="760.5" font-size="20" fill="#f4f4f4" text-anchor="start" textLength="46" lengthAdjust="spacingAndGlyphs">80%</text>
<text x="1431" y="760.5" font-size="20" fill="#f4f4f4" text-anchor="start" textLength="61" lengthAdjust="spacingAndGlyphs">100%</text>
<rect x="725.3" y="770.2" width="22.7" height="32.2" fill="url(#tleft)"/>
<rect x="748" y="770.2" width="799.7" height="32.2" fill="#3d3d3d"/>
<text x="755" y="794.8" font-size="22" fill="#f0f0f0" text-anchor="start" textLength="95" lengthAdjust="spacingAndGlyphs">x: CIE31</text>
<text x="937.5" y="794.8" font-size="22" fill="#f0f0f0" text-anchor="start" textLength="77" lengthAdjust="spacingAndGlyphs">0,3438</text>
<text x="1060.5" y="794.8" font-size="22" fill="#f0f0f0" text-anchor="start" textLength="77" lengthAdjust="spacingAndGlyphs">0,3652</text>
<text x="1184" y="794.8" font-size="22" fill="#f0f0f0" text-anchor="start" textLength="77" lengthAdjust="spacingAndGlyphs">0,3854</text>
<text x="1307.5" y="794.8" font-size="22" fill="#f0f0f0" text-anchor="start" textLength="77" lengthAdjust="spacingAndGlyphs">0,4057</text>
<text x="1431" y="794.8" font-size="22" fill="#f0f0f0" text-anchor="start" textLength="77" lengthAdjust="spacingAndGlyphs">0,4271</text>
<rect x="725.3" y="802.4" width="22.7" height="32.8" fill="url(#tleft)"/>
<rect x="748" y="802.4" width="799.7" height="32.8" fill="#7f7f7f"/>
<text x="755" y="827.0" font-size="22" fill="#f0f0f0" text-anchor="start" textLength="95" lengthAdjust="spacingAndGlyphs">y: CIE31</text>
<text x="937.5" y="827.0" font-size="22" fill="#f0f0f0" text-anchor="start" textLength="77" lengthAdjust="spacingAndGlyphs">0,3726</text>
<text x="1060.5" y="827.0" font-size="22" fill="#f0f0f0" text-anchor="start" textLength="77" lengthAdjust="spacingAndGlyphs">0,4061</text>
<text x="1184" y="827.0" font-size="22" fill="#f0f0f0" text-anchor="start" textLength="77" lengthAdjust="spacingAndGlyphs">0,4377</text>
<text x="1307.5" y="827.0" font-size="22" fill="#f0f0f0" text-anchor="start" textLength="77" lengthAdjust="spacingAndGlyphs">0,4694</text>
<text x="1431" y="827.0" font-size="22" fill="#f0f0f0" text-anchor="start" textLength="77" lengthAdjust="spacingAndGlyphs">0,5030</text>
<rect x="725.3" y="835.2" width="22.7" height="32.4" fill="url(#tleft)"/>
<rect x="748" y="835.2" width="799.7" height="32.4" fill="#3d3d3d"/>
<text x="755" y="859.8" font-size="22" fill="#f0f0f0" text-anchor="start" textLength="13" lengthAdjust="spacingAndGlyphs">Y</text>
<text x="937.5" y="859.8" font-size="22" fill="#f0f0f0" text-anchor="start" textLength="108" lengthAdjust="spacingAndGlyphs">256,4975</text>
<text x="1060.5" y="859.8" font-size="22" fill="#f0f0f0" text-anchor="start" textLength="108" lengthAdjust="spacingAndGlyphs">252,6790</text>
<text x="1184" y="859.8" font-size="22" fill="#f0f0f0" text-anchor="start" textLength="108" lengthAdjust="spacingAndGlyphs">249,6371</text>
<text x="1307.5" y="859.8" font-size="22" fill="#f0f0f0" text-anchor="start" textLength="108" lengthAdjust="spacingAndGlyphs">247,0631</text>
<text x="1431" y="859.8" font-size="22" fill="#f0f0f0" text-anchor="start" textLength="108" lengthAdjust="spacingAndGlyphs">243,9847</text>
<rect x="725.3" y="867.6" width="22.7" height="32.2" fill="url(#tleft)"/>
<rect x="748" y="867.6" width="799.7" height="32.2" fill="#7f7f7f"/>
<text x="755" y="892.2" font-size="22" fill="#f0f0f0" text-anchor="start" textLength="164" lengthAdjust="spacingAndGlyphs">Target x:CIE31</text>
<text x="937.5" y="892.2" font-size="22" fill="#f0f0f0" text-anchor="start" textLength="77" lengthAdjust="spacingAndGlyphs">0,3344</text>
<text x="1060.5" y="892.2" font-size="22" fill="#f0f0f0" text-anchor="start" textLength="77" lengthAdjust="spacingAndGlyphs">0,3564</text>
<text x="1184" y="892.2" font-size="22" fill="#f0f0f0" text-anchor="start" textLength="77" lengthAdjust="spacingAndGlyphs">0,3773</text>
<text x="1307.5" y="892.2" font-size="22" fill="#f0f0f0" text-anchor="start" textLength="77" lengthAdjust="spacingAndGlyphs">0,3969</text>
<text x="1431" y="892.2" font-size="22" fill="#f0f0f0" text-anchor="start" textLength="77" lengthAdjust="spacingAndGlyphs">0,4193</text>
<rect x="725.3" y="899.8" width="22.7" height="32.4" fill="url(#tleft)"/>
<rect x="748" y="899.8" width="799.7" height="32.4" fill="#3d3d3d"/>
<text x="755" y="924.4" font-size="22" fill="#f0f0f0" text-anchor="start" textLength="164" lengthAdjust="spacingAndGlyphs">Target y:CIE31</text>
<text x="937.5" y="924.4" font-size="22" fill="#f0f0f0" text-anchor="start" textLength="77" lengthAdjust="spacingAndGlyphs">0,3648</text>
<text x="1060.5" y="924.4" font-size="22" fill="#f0f0f0" text-anchor="start" textLength="77" lengthAdjust="spacingAndGlyphs">0,4013</text>
<text x="1184" y="924.4" font-size="22" fill="#f0f0f0" text-anchor="start" textLength="77" lengthAdjust="spacingAndGlyphs">0,4358</text>
<text x="1307.5" y="924.4" font-size="22" fill="#f0f0f0" text-anchor="start" textLength="77" lengthAdjust="spacingAndGlyphs">0,4682</text>
<text x="1431" y="924.4" font-size="22" fill="#f0f0f0" text-anchor="start" textLength="77" lengthAdjust="spacingAndGlyphs">0,5053</text>
<rect x="725.3" y="932.2" width="22.7" height="32.3" fill="url(#tleft)"/>
<rect x="748" y="932.2" width="799.7" height="32.3" fill="#7f7f7f"/>
<text x="755" y="956.8" font-size="22" fill="#f0f0f0" text-anchor="start" textLength="95" lengthAdjust="spacingAndGlyphs">Target Y</text>
<text x="937.5" y="956.8" font-size="22" fill="#f0f0f0" text-anchor="start" textLength="108" lengthAdjust="spacingAndGlyphs">256,8413</text>
<text x="1060.5" y="956.8" font-size="22" fill="#f0f0f0" text-anchor="start" textLength="108" lengthAdjust="spacingAndGlyphs">252,3330</text>
<text x="1184" y="956.8" font-size="22" fill="#f0f0f0" text-anchor="start" textLength="108" lengthAdjust="spacingAndGlyphs">248,8690</text>
<text x="1307.5" y="956.8" font-size="22" fill="#f0f0f0" text-anchor="start" textLength="108" lengthAdjust="spacingAndGlyphs">246,1504</text>
<text x="1431" y="956.8" font-size="22" fill="#f0f0f0" text-anchor="start" textLength="108" lengthAdjust="spacingAndGlyphs">243,5222</text>
<rect x="0" y="996" width="1920" height="48" fill="url(#tbbg)"/><rect x="0" y="996" width="1920" height="1" fill="#2a2a2a"/>
<rect x="1" y="997.5" width="33.5" height="46" rx="2.5" fill="url(#tbbtn)"/>
<circle cx="17.5" cy="1004" r="6" fill="url(#circ2)"/><path d="M13.8 1005.8h7.4l-3.7-3.8z" fill="#111"/>
<rect x="4.5" y="1017" width="26.5" height="22.5" rx="2.5" fill="#ffff00" stroke="#585858" stroke-width="0.6"/>
<rect x="39" y="997.5" width="112.5" height="46" rx="2.5" fill="url(#tbbtn)"/>
<rect x="43" y="1001.5" width="104.5" height="27" rx="2.5" fill="#c2c2a2" stroke="rgba(0,0,0,0.25)" stroke-width="1"/>
<text x="95.5" y="1040.5" font-size="8.5" fill="#2a2a2a" text-anchor="middle" font-weight="bold">20%</text>
<rect x="153" y="997.5" width="112.5" height="46" rx="2.5" fill="url(#tbbtn)"/>
<rect x="157" y="1001.5" width="104.5" height="27" rx="2.5" fill="#c3c289" stroke="rgba(0,0,0,0.25)" stroke-width="1"/>
<text x="209.5" y="1040.5" font-size="8.5" fill="#2a2a2a" text-anchor="middle" font-weight="bold">40%</text>
<rect x="267" y="997.5" width="112.5" height="46" rx="2.5" fill="url(#tbbtn)"/>
<rect x="271" y="1001.5" width="104.5" height="27" rx="2.5" fill="#c4c270" stroke="rgba(0,0,0,0.25)" stroke-width="1"/>
<text x="323.5" y="1040.5" font-size="8.5" fill="#2a2a2a" text-anchor="middle" font-weight="bold">60%</text>
<rect x="381" y="997.5" width="112.5" height="46" rx="2.5" fill="url(#tbbtn)"/>
<rect x="385" y="1001.5" width="104.5" height="27" rx="2.5" fill="#c4c24e" stroke="rgba(0,0,0,0.25)" stroke-width="1"/>
<text x="437.5" y="1040.5" font-size="8.5" fill="#2a2a2a" text-anchor="middle" font-weight="bold">80%</text>
<rect x="495" y="997.5" width="112.5" height="46" rx="2.5" fill="#1c1c1c"/>
<rect x="499" y="1001.5" width="104.5" height="27" rx="2.5" fill="#c4c000" stroke="rgba(0,0,0,0.25)" stroke-width="1"/>
<text x="551.5" y="1040.5" font-size="8.5" fill="#f4f4f4" text-anchor="middle" font-weight="bold">100%</text>
<rect x="1678" y="997.5" width="35.5" height="46.5" rx="2.5" fill="url(#tbbtn)"/>
<rect x="1678" y="1019" width="35.5" height="1" fill="#555"/>
<circle cx="1695.5" cy="1004" r="6" fill="url(#circ2)"/><path d="M1691.5 1006h8l-4-4.2z" fill="#111"/>
<rect x="1685" y="1016.5" width="21" height="21" rx="2.5" fill="#aaa" stroke="#111" stroke-width="1.5"/><rect x="1690" y="1021.5" width="11" height="9.5" fill="#000"/><rect x="1690" y="1021.5" width="11" height="4.5" fill="#1e1e1e"/>
<rect x="1715.0" y="997.5" width="33.3" height="22" fill="url(#tbbtn2)"/>
<circle cx="1731.7" cy="1008.5" r="7.5" fill="url(#circ2)"/>
<rect x="1748.8" y="997.5" width="33.3" height="22" fill="url(#tbbtn2)"/>
<circle cx="1765.5" cy="1008.5" r="7.5" fill="url(#circ2)"/>
<rect x="1782.6" y="997.5" width="33.3" height="22" fill="url(#tbbtn2)"/>
<circle cx="1799.3" cy="1008.5" r="7.5" fill="url(#circ2)"/>
<rect x="1816.4" y="997.5" width="33.3" height="22" fill="url(#tbbtn2)"/>
<circle cx="1833.1" cy="1008.5" r="7.5" fill="url(#circ2)"/>
<rect x="1850.2" y="997.5" width="33.3" height="22" fill="url(#tbbtn2)"/>
<circle cx="1866.9" cy="1008.5" r="7.5" fill="url(#circ2)"/>
<rect x="1728.7" y="1005.5" width="6" height="6" fill="#222"/>
<path d="M1763.0 1004.5v8l6.5-4z" fill="#222"/>
<path d="M1795.8 1004.5h-1v8h1M1802.8 1004.5h1v8h-1M1797.3 1008.5h4" fill="none" stroke="#222" stroke-width="1.2"/>
<path d="M1833.1 1008.5c-2-2.5-5-2.5-5 0s3 2.5 5 0 5-2.5 5 0-3 2.5-5 0" fill="none" stroke="#222" stroke-width="1.3"/>
<path d="M1862.9 1008.5a4 4 0 0 1 7-2.5M1870.9 1008.5a4 4 0 0 1-7 2.5" fill="none" stroke="#222" stroke-width="1.4"/>
<rect x="1884" y="997.5" width="36" height="22" fill="url(#darkr)"/><circle cx="1901.5" cy="1008.5" r="7.5" fill="#232323"/>
<rect x="1715" y="1020.5" width="101.5" height="23.5" rx="2" fill="url(#tbbtn2)"/>
<rect x="1816.7" y="1020.5" width="101.5" height="23.5" rx="2" fill="url(#tbbtn2)"/>
<circle cx="1737.5" cy="1032" r="7" fill="url(#circ2)"/><path d="M1739 1028.5l-3 3.5 3 3.5M1742 1028.5l-3 3.5 3 3.5" fill="none" stroke="#333" stroke-width="1.2"/>
<circle cx="1897.5" cy="1032" r="7" fill="url(#circ2)"/><path d="M1893 1028.5l3 3.5-3 3.5M1896 1028.5l3 3.5-3 3.5" fill="none" stroke="#333" stroke-width="1.2"/>
<text x="1757.5" y="1037.5" font-size="16" fill="#333" text-anchor="start" textLength="37.5" lengthAdjust="spacingAndGlyphs" font-weight="bold">Back</text>
<text x="1837.5" y="1037.5" font-size="16" fill="#333" text-anchor="start" textLength="38.5" lengthAdjust="spacingAndGlyphs" font-weight="bold">Next</text>
</svg>
<div class="cl" style="clip-path:path('M1313.0 674.7 L1313.0 674.7 L1313.0 674.7 L1313.0 674.7 L1312.9 674.7 L1312.9 674.7 L1312.9 674.7 L1312.9 674.7 L1312.9 674.7 L1312.8 674.7 L1312.8 674.7 L1312.8 674.7 L1312.7 674.7 L1312.7 674.7 L1312.7 674.7 L1312.7 674.7 L1312.6 674.7 L1312.6 674.7 L1312.6 674.7 L1312.5 674.7 L1312.5 674.7 L1312.4 674.8 L1312.4 674.8 L1312.3 674.8 L1312.3 674.8 L1312.3 674.8 L1312.2 674.8 L1312.2 674.8 L1312.1 674.8 L1312.1 674.8 L1312.0 674.8 L1312.0 674.8 L1311.9 674.8 L1311.9 674.8 L1311.8 674.8 L1311.7 674.8 L1311.7 674.8 L1311.6 674.8 L1311.6 674.8 L1311.5 674.8 L1311.4 674.8 L1311.3 674.8 L1311.2 674.8 L1311.2 674.8 L1311.1 674.8 L1311.0 674.7 L1310.9 674.7 L1310.8 674.6 L1310.6 674.6 L1310.5 674.5 L1310.3 674.5 L1310.2 674.4 L1310.0 674.3 L1309.8 674.2 L1309.7 674.1 L1309.5 674.0 L1309.3 673.9 L1309.1 673.8 L1308.9 673.7 L1308.7 673.5 L1308.4 673.4 L1308.2 673.2 L1307.9 673.1 L1307.6 672.9 L1307.3 672.7 L1307.0 672.5 L1306.7 672.3 L1306.4 672.0 L1306.0 671.8 L1305.7 671.5 L1305.3 671.3 L1304.9 671.0 L1304.5 670.7 L1304.1 670.4 L1303.6 670.1 L1303.2 669.8 L1302.7 669.5 L1302.2 669.2 L1301.6 668.8 L1301.0 668.4 L1300.4 668.0 L1299.8 667.6 L1299.1 667.1 L1298.4 666.7 L1297.7 666.2 L1296.9 665.7 L1296.1 665.2 L1295.3 664.6 L1294.5 664.1 L1293.7 663.5 L1292.8 662.9 L1291.8 662.2 L1290.8 661.5 L1289.8 660.7 L1288.8 659.9 L1287.7 659.1 L1286.6 658.2 L1285.5 657.2 L1284.3 656.3 L1283.1 655.2 L1281.9 654.1 L1280.6 652.8 L1279.2 651.4 L1277.7 649.8 L1276.1 648.0 L1274.5 646.2 L1272.8 644.1 L1271.0 641.9 L1269.2 639.4 L1267.3 636.8 L1265.3 633.9 L1263.2 630.9 L1261.0 627.6 L1258.8 624.0 L1256.5 620.1 L1254.0 615.8 L1251.5 611.2 L1248.9 606.4 L1246.2 601.2 L1243.4 595.5 L1240.4 589.4 L1237.3 582.9 L1234.1 576.1 L1230.8 568.8 L1227.4 561.0 L1224.0 552.8 L1220.6 544.1 L1217.2 534.8 L1213.8 525.0 L1210.4 514.7 L1206.9 503.9 L1203.5 492.7 L1200.2 481.1 L1196.9 469.0 L1193.5 456.3 L1190.2 443.2 L1186.9 429.7 L1183.8 416.1 L1181.0 402.6 L1178.3 388.8 L1175.7 374.8 L1173.3 360.6 L1171.1 346.4 L1169.2 332.4 L1167.6 318.7 L1166.3 305.2 L1165.2 291.8 L1164.3 278.6 L1163.8 265.6 L1163.6 253.1 L1163.8 241.0 L1164.4 229.3 L1165.3 217.9 L1166.6 206.9 L1168.2 196.4 L1170.2 186.5 L1172.6 177.3 L1175.4 168.8 L1178.6 160.9 L1182.1 153.6 L1186.0 147.0 L1190.2 141.1 L1194.5 136.1 L1199.1 131.9 L1204.0 128.5 L1209.2 125.9 L1214.6 123.9 L1220.0 122.5 L1225.5 121.5 L1231.1 121.1 L1236.9 121.4 L1242.7 122.3 L1248.7 123.5 L1254.6 125.0 L1260.5 126.6 L1266.4 128.3 L1272.4 130.4 L1278.3 132.7 L1284.3 135.1 L1290.2 137.6 L1296.0 140.1 L1301.7 142.7 L1307.4 145.3 L1312.9 148.0 L1318.5 150.7 L1324.0 153.5 L1329.5 156.4 L1334.9 159.3 L1340.3 162.2 L1345.7 165.2 L1351.0 168.3 L1356.3 171.4 L1361.6 174.6 L1367.0 177.8 L1372.3 181.1 L1377.6 184.4 L1382.8 187.8 L1388.1 191.2 L1393.4 194.6 L1398.6 198.1 L1403.9 201.6 L1409.1 205.1 L1414.3 208.7 L1419.5 212.3 L1424.8 216.0 L1430.0 219.6 L1435.2 223.3 L1440.4 227.0 L1445.6 230.7 L1450.8 234.5 L1456.0 238.3 L1461.3 242.0 L1466.5 245.8 L1471.7 249.7 L1477.0 253.5 L1482.2 257.4 L1487.4 261.2 L1492.6 265.1 L1497.8 268.9 L1503.0 272.8 L1508.2 276.7 L1513.4 280.6 L1518.6 284.5 L1523.8 288.4 L1529.0 292.3 L1534.2 296.2 L1539.4 300.0 L1544.5 303.9 L1549.7 307.8 L1554.8 311.7 L1559.9 315.5 L1565.0 319.4 L1570.0 323.2 L1575.1 327.0 L1580.1 330.8 L1585.1 334.6 L1590.0 338.4 L1595.0 342.1 L1599.9 345.9 L1604.8 349.6 L1609.6 353.2 L1614.4 356.9 L1619.2 360.5 L1623.9 364.1 L1628.6 367.7 L1633.3 371.2 L1637.9 374.7 L1642.5 378.2 L1647.0 381.6 L1651.5 385.0 L1655.9 388.3 L1660.3 391.6 L1664.6 394.9 L1668.8 398.1 L1672.9 401.3 L1677.0 404.4 L1681.1 407.5 L1685.0 410.5 L1688.8 413.4 L1692.6 416.2 L1696.2 419.0 L1699.8 421.7 L1703.2 424.3 L1706.6 426.9 L1710.0 429.4 L1713.2 431.9 L1716.5 434.3 L1719.6 436.7 L1722.7 439.0 L1725.7 441.3 L1728.5 443.5 L1731.3 445.6 L1734.0 447.6 L1736.6 449.6 L1739.2 451.5 L1741.6 453.3 L1744.0 455.1 L1746.3 456.8 L1748.5 458.5 L1750.6 460.1 L1752.6 461.7 L1754.6 463.2 L1756.5 464.6 L1758.3 466.0 L1760.1 467.4 L1761.8 468.7 L1763.4 469.9 L1765.0 471.1 L1766.5 472.2 L1768.0 473.3 L1769.4 474.4 L1770.7 475.4 L1772.0 476.4 L1773.3 477.3 L1774.5 478.2 L1775.6 479.1 L1776.8 480.0 L1777.8 480.8 L1778.9 481.6 L1779.9 482.4 L1780.9 483.1 L1781.8 483.9 L1782.8 484.6 L1783.7 485.3 L1784.5 485.9 L1785.4 486.6 L1786.2 487.2 L1787.0 487.8 L1787.8 488.4 L1788.5 489.0 L1789.2 489.5 L1789.9 490.0 L1790.6 490.5 L1791.2 491.0 L1791.9 491.5 L1792.5 491.9 L1793.0 492.3 L1793.6 492.7 L1794.1 493.1 L1794.6 493.5 L1795.1 493.9 L1795.5 494.2 L1795.9 494.5 L1796.3 494.8 L1796.7 495.1 L1797.1 495.4 L1797.5 495.7 L1797.8 496.0 L1798.1 496.2 L1798.5 496.4 L1798.8 496.7 L1799.0 496.9 L1799.3 497.1 L1799.6 497.3 L1799.8 497.5 L1800.0 497.6 L1800.2 497.8 L1800.4 497.9 L1800.6 498.1 L1800.8 498.2 L1800.9 498.3 L1801.1 498.4 L1801.2 498.5 L1801.3 498.6 L1801.5 498.7 L1801.6 498.8 L1801.7 498.9 L1801.8 499.0 L1802.0 499.1 L1802.2 499.3 L1802.4 499.4 L1802.6 499.6 L1802.8 499.8 L1803.0 499.9 L1803.2 500.1 L1803.4 500.2 L1803.6 500.3 L1803.7 500.5 L1803.9 500.6 L1804.0 500.7 L1804.1 500.7 L1804.2 500.8 L1804.2 500.8 L1804.3 500.9 L1804.3 500.9 L1804.3 500.9 L1804.4 500.9 Z')"><div class="bl" style="filter:blur(4px)"><style></style><i style="left:1140px;width:704px;height:8px;top:100px;background:linear-gradient(90deg,#009900,#009900,#009900,#009900,#009900,#009900,#009900,#009900,#009900,#009900,#009900,#009900,#009900,#009900,#009900,#009900,#009900,#009900,#009900,#009900,#009900,#009900,#039900,#0b9900,#149900,#1d9900,#279900,#319900,#3b9900,#459900,#509900,#5b9900,#679900,#729900,#7f9900,#8c9900,#999900,#998c00,#998100,#997700,#996f00,#996700,#996000,#995900,#995300)"></i><i style="left:1140px;width:704px;height:8px;top:108px;background:linear-gradient(90deg,#009901,#009900,#009900,#009900,#009900,#009900,#009900,#009900,#009900,#009900,#009900,#009900,#009900,#009900,#009900,#009900,#009900,#009900,#009900,#009900,#009900,#009900,#049900,#0d9900,#169900,#209900,#299900,#339900,#3e9900,#489900,#539900,#5f9900,#6b9900,#779900,#849900,#919900,#999400,#998800,#997d00,#997300,#996b00,#996300,#995c00,#995600,#995100)"></i><i style="left:1140px;width:704px;height:8px;top:116px;background:linear-gradient(90deg,#009902,#009901,#009900,#009900,#009900,#009900,#009900,#009900,#009900,#009900,#009900,#009900,#009900,#009900,#009900,#009900,#009900,#009900,#009900,#009900,#009900,#009900,#069900,#0f9900,#189900,#229900,#2c9900,#369900,#419900,#4c9900,#579900,#639900,#6f9900,#7b9900,#889900,#969900,#998f00,#998300,#997900,#996f00,#996700,#996000,#995900,#995300,#994e00)"></i><i style="left:1140px;width:704px;height:8px;top:124px;background:linear-gradient(90deg,#009904,#009902,#009900,#009900,#009900,#009900,#009900,#009900,#009900,#009900,#009900,#009900,#009900,#009900,#009900,#009900,#009900,#009900,#009900,#009900,#009900,#009900,#089900,#119900,#1b9900,#249900,#2e9900,#399900,#449900,#4f9900,#5b9900,#679900,#739900,#809900,#8e9900,#999600,#998900,#997e00,#997400,#996b00,#996400,#995d00,#995600,#995000,#994b00)"></i><i style="left:1140px;width:704px;height:8px;top:132px;background:linear-gradient(90deg,#009906,#009904,#009902,#009900,#009900,#009900,#009900,#009900,#009900,#009900,#009900,#009900,#009900,#009900,#009900,#009900,#009900,#009900,#009900,#009900,#009900,#019900,#0a9900,#139900,#1d9900,#279900,#319900,#3c9900,#479900,#539900,#5f9900,#6b9900,#789900,#859900,#939900,#999100,#998500,#997a00,#997000,#996800,#996000,#995900,#995300,#994d00,#994800)"></i><i style="left:1140px;width:704px;height:8px;top:140px;background:linear-gradient(90deg,#009907,#009905,#009904,#009902,#009900,#009900,#009900,#009900,#009900,#009900,#009900,#009900,#009900,#009900,#009900,#009900,#009900,#009900,#009900,#009900,#009900,#029900,#0c9900,#159900,#1f9900,#299900,#349900,#3f9900,#4a9900,#569900,#639900,#6f9900,#7d9900,#8a9900,#999900,#998c00,#998000,#997500,#996c00,#996400,#995d00,#995600,#995000,#994b00,#994600)"></i><i style="left:1140px;width:704px;height:8px;top:148px;background:linear-gradient(90deg,#009909,#009907,#009905,#009903,#009901,#009900,#009900,#009900,#009900,#009900,#009900,#009900,#009900,#009900,#009900,#009900,#009900,#009900,#009900,#009900,#009900,#049900,#0d9900,#179900,#229900,#2c9900,#379900,#429900,#4e9900,#5a9900,#679900,#749900,#829900,#909900,#999300,#998600,#997b00,#997100,#996800,#996000,#995900,#995300,#994d00,#994800,#994300)"></i><i style="left:1140px;width:704px;height:8px;top:156px;background:linear-gradient(90deg,#00990a,#009909,#009907,#009905,#009903,#009901,#009900,#009900,#009900,#009900,#009900,#009900,#009900,#009900,#009900,#009900,#009900,#009900,#009900,#009900,#009900,#069900,#109900,#1a9900,#249900,#2f9900,#3a9900,#469900,#529900,#5e9900,#6b9900,#799900,#879900,#969900,#998e00,#998100,#997600,#996d00,#996400,#995d00,#995600,#995000,#994a00,#994500,#994000)"></i><i style="left:1140px;width:704px;height:8px;top:164px;background:linear-gradient(90deg,#00990c,#00990a,#009909,#009907,#009905,#009903,#009901,#009900,#009900,#009900,#009900,#009900,#009900,#009900,#009900,#009900,#009900,#009900,#009900,#009900,#009900,#089900,#129900,#1c9900,#279900,#329900,#3d9900,#499900,#569900,#639900,#709900,#7e9900,#8d9900,#999600,#998800,#997c00,#997200,#996900,#996000,#995900,#995300,#994d00,#994700,#994200,#993e00)"></i><i style="left:1140px;width:704px;height:8px;top:172px;background:linear-gradient(90deg,#00990e,#00990c,#00990a,#009908,#009907,#009905,#009903,#009900,#009900,#009900,#009900,#009900,#009900,#009900,#009900,#009900,#009900,#009900,#009900,#009900,#009900,#0a9900,#149900,#1e9900,#299900,#359900,#419900,#4d9900,#5a9900,#679900,#759900,#839900,#929900,#999000,#998300,#997800,#996e00,#996500,#995d00,#995600,#994f00,#994a00,#994400,#994000,#993b00)"></i><i style="left:1140px;width:704px;height:8px;top:180px;background:linear-gradient(90deg,#009910,#00990e,#00990c,#00990a,#009908,#009906,#009904,#009902,#009900,#009900,#009900,#009900,#009900,#009900,#009900,#009900,#009900,#009900,#009900,#009900,#029900,#0c9900,#169900,#219900,#2c9900,#389900,#449900,#519900,#5e9900,#6c9900,#7a9900,#899900,#999900,#998b00,#997e00,#997300,#996900,#996100,#995900,#995200,#994c00,#994700,#994200,#993d00,#993900)"></i><i style="left:1140px;width:704px;height:8px;top:188px;background:linear-gradient(90deg,#009912,#009910,#00990e,#00990c,#00990a,#009908,#009906,#009904,#009902,#009900,#009900,#009900,#009900,#009900,#009900,#009900,#009900,#009900,#009900,#009900,#039900,#0e9900,#199900,#249900,#2f9900,#3b9900,#489900,#559900,#629900,#719900,#7f9900,#8f9900,#999300,#998500,#997900,#996e00,#996500,#995d00,#995600,#994f00,#994900,#994400,#993f00,#993a00,#993600)"></i><i style="left:1140px;width:704px;height:8px;top:196px;background:linear-gradient(90deg,#009914,#009912,#009910,#00990e,#00990c,#00990a,#009908,#009906,#009904,#009902,#009900,#009900,#009900,#009900,#009900,#009900,#009900,#009900,#009900,#009900,#059900,#109900,#1b9900,#279900,#329900,#3f9900,#4c9900,#599900,#679900,#769900,#859900,#959900,#998d00,#998000,#997400,#996a00,#996100,#995900,#995200,#994c00,#994600,#994100,#993c00,#993800,#993400)"></i><i style="left:1140px;width:704px;height:8px;top:204px;background:linear-gradient(90deg,#009916,#009914,#009912,#009910,#00990e,#00990c,#00990a,#009908,#009906,#009904,#009901,#009900,#009900,#009900,#009900,#009900,#009900,#009900,#009900,#009900,#079900,#129900,#1e9900,#299900,#369900,#439900,#509900,#5e9900,#6c9900,#7b9900,#8b9900,#999600,#998700,#997a00,#996f00,#996600,#995d00,#995500,#994f00,#994900,#994300,#993e00,#993900,#993500,#993100)"></i><i style="left:1140px;width:704px;height:8px;top:212px;background:linear-gradient(90deg,#009918,#009916,#009914,#009912,#009910,#00990e,#00990c,#00990a,#009908,#009906,#009903,#009901,#009900,#009900,#009900,#009900,#009900,#009900,#009900,#009900,#0a9900,#159900,#209900,#2d9900,#399900,#469900,#549900,#629900,#719900,#819900,#919900,#999000,#998200,#997500,#996b00,#996100,#995900,#995200,#994b00,#994500,#994000,#993b00,#993700,#993300,#992f00)"></i><i style="left:1140px;width:704px;height:8px;top:220px;background:linear-gradient(90deg,#00991a,#009918,#009916,#009914,#009912,#009910,#00990e,#00990c,#00990a,#009908,#009905,#009903,#009900,#009900,#009900,#009900,#009900,#009900,#009900,#019900,#0c9900,#179900,#239900,#309900,#3d9900,#4a9900,#599900,#679900,#779900,#879900,#989900,#998a00,#997c00,#997000,#996600,#995d00,#995500,#994e00,#994800,#994200,#993d00,#993900,#993400,#993000,#992d00)"></i><i style="left:1140px;width:704px;height:8px;top:228px;background:linear-gradient(90deg,#00991c,#00991a,#009919,#009917,#009915,#009913,#009911,#00990e,#00990c,#00990a,#009908,#009905,#009903,#009900,#009900,#009900,#009900,#009900,#009900,#039900,#0e9900,#1a9900,#269900,#339900,#419900,#4f9900,#5d9900,#6d9900,#7d9900,#8e9900,#999300,#998400,#997700,#996b00,#996200,#995900,#995100,#994b00,#994500,#993f00,#993a00,#993600,#993200,#992e00,#992b00)"></i><i style="left:1140px;width:704px;height:8px;top:236px;background:linear-gradient(90deg,#00991e,#00991d,#00991b,#009919,#009917,#009915,#009913,#009911,#00990f,#00990c,#00990a,#009907,#009905,#009902,#009900,#009900,#009900,#009900,#009900,#059900,#119900,#1d9900,#2a9900,#379900,#459900,#539900,#629900,#729900,#839900,#949900,#998c00,#997e00,#997100,#996700,#995d00,#995500,#994e00,#994700,#994200,#993c00,#993800,#993300,#992f00,#992c00,#992800)"></i><i style="left:1140px;width:704px;height:8px;top:244px;background:linear-gradient(90deg,#009921,#00991f,#00991d,#00991b,#009919,#009917,#009915,#009913,#009911,#00990f,#00990c,#00990a,#009907,#009905,#009902,#009900,#009900,#009900,#009900,#079900,#139900,#209900,#2d9900,#3b9900,#499900,#589900,#689900,#789900,#899900,#999600,#998600,#997800,#996c00,#996200,#995900,#995100,#994a00,#994400,#993e00,#993900,#993500,#993100,#992d00,#992900,#992600)"></i><i style="left:1140px;width:704px;height:8px;top:252px;background:linear-gradient(90deg,#009923,#009922,#009920,#00991e,#00991c,#00991a,#009918,#009916,#009913,#009911,#00990f,#00990c,#00990a,#009907,#009904,#009901,#009900,#009900,#009900,#0a9900,#169900,#239900,#309900,#3f9900,#4d9900,#5d9900,#6d9900,#7e9900,#909900,#998f00,#998000,#997200,#996700,#995d00,#995500,#994d00,#994700,#994100,#993b00,#993600,#993200,#992e00,#992a00,#992700,#992400)"></i><i style="left:1140px;width:704px;height:8px;top:260px;background:linear-gradient(90deg,#009926,#009924,#009922,#009920,#00991e,#00991c,#00991a,#009918,#009916,#009914,#009911,#00990f,#00990c,#00990a,#009907,#009904,#009901,#009900,#009900,#0c9900,#199900,#269900,#349900,#439900,#529900,#629900,#739900,#859900,#989900,#998800,#997a00,#996d00,#996200,#995900,#995100,#994a00,#994300,#993d00,#993800,#993400,#992f00,#992c00,#992800,#992500,#992200)"></i><i style="left:1140px;width:704px;height:8px;top:268px;background:linear-gradient(90deg,#009929,#009927,#009925,#009923,#009921,#00991f,#00991d,#00991b,#009919,#009916,#009914,#009912,#00990f,#00990c,#00990a,#009907,#009904,#009900,#029900,#0f9900,#1c9900,#2a9900,#389900,#479900,#579900,#689900,#7a9900,#8c9900,#999300,#998200,#997400,#996800,#995d00,#995500,#994d00,#994600,#994000,#993a00,#993500,#993100,#992d00,#992900,#992600,#992300,#992000)"></i><i style="left:1140px;width:704px;height:8px;top:276px;background:linear-gradient(90deg,#00992b,#00992a,#009928,#009926,#009924,#009922,#009920,#00991e,#00991c,#009919,#009917,#009914,#009912,#00990f,#00990c,#009909,#009906,#009903,#049900,#119900,#1f9900,#2d9900,#3c9900,#4c9900,#5d9900,#6e9900,#809900,#949900,#998b00,#997b00,#996e00,#996300,#995900,#995000,#994900,#994200,#993c00,#993700,#993200,#992e00,#992a00,#992700,#992300,#992000,#991e00)"></i><i style="left:1140px;width:704px;height:8px;top:284px;background:linear-gradient(90deg,#00992e,#00992c,#00992b,#009929,#009927,#009925,#009923,#009921,#00991e,#00991c,#00991a,#009917,#009915,#009912,#00990f,#00990c,#009909,#009906,#079903,#149900,#229900,#319900,#419900,#519900,#629900,#749900,#879900,#999600,#998400,#997500,#996800,#995e00,#995400,#994c00,#994500,#993f00,#993900,#993400,#993000,#992b00,#992800,#992400,#992100,#991e00,#991b00)"></i><i style="left:1140px;width:704px;height:8px;top:292px;background:linear-gradient(90deg,#009931,#00992f,#00992e,#00992c,#00992a,#009928,#009926,#009924,#009922,#00991f,#00991d,#00991a,#009918,#009915,#009912,#00990f,#00990c,#009909,#099906,#179902,#269900,#359900,#459900,#569900,#689900,#7b9900,#8f9900,#998e00,#997d00,#996f00,#996300,#995900,#995000,#994800,#994100,#993b00,#993600,#993100,#992d00,#992900,#992500,#992200,#991f00,#991c00,#991900)"></i><i style="left:1140px;width:704px;height:8px;top:300px;background:linear-gradient(90deg,#009934,#009933,#009931,#00992f,#00992d,#00992b,#009929,#009927,#009925,#009923,#009920,#00991e,#00991b,#009918,#009916,#009913,#009910,#00990c,#0c9909,#1b9905,#2a9902,#3a9900,#4a9900,#5c9900,#6f9900,#829900,#979900,#998700,#997700,#996900,#995e00,#995400,#994c00,#994400,#993e00,#993800,#993300,#992e00,#992a00,#992600,#992300,#992000,#991d00,#991a00,#991700)"></i><i style="left:1140px;width:704px;height:8px;top:308px;background:linear-gradient(90deg,#009938,#009936,#009934,#009932,#009930,#00992e,#00992c,#00992a,#009928,#009926,#009924,#009921,#00991f,#00991c,#009919,#009916,#009913,#019910,#0f990c,#1e9909,#2e9905,#3e9901,#509900,#629900,#769900,#8a9900,#999200,#997f00,#997000,#996400,#995900,#994f00,#994700,#994000,#993a00,#993500,#993000,#992b00,#992700,#992400,#992000,#991d00,#991a00,#991800,#991500)"></i><i style="left:1140px;width:704px;height:8px;top:316px;background:linear-gradient(90deg,#00993b,#009939,#009938,#009936,#009934,#009932,#009930,#00992e,#00992c,#009929,#009927,#009925,#009922,#00991f,#00991d,#00991a,#009917,#049913,#129910,#22990c,#329909,#439905,#559900,#699900,#7d9900,#939900,#998a00,#997800,#996a00,#995e00,#995400,#994b00,#994300,#993d00,#993700,#993200,#992d00,#992900,#992500,#992100,#991e00,#991b00,#991800,#991600,#991400)"></i><i style="left:1140px;width:704px;height:8px;top:324px;background:linear-gradient(90deg,#00993e,#00993d,#00993b,#009939,#009938,#009936,#009934,#009932,#00992f,#00992d,#00992b,#009928,#009926,#009923,#009920,#00991e,#00991a,#069917,#169914,#269910,#37990c,#499908,#5b9904,#709900,#859900,#999600,#998200,#997200,#996400,#995900,#994f00,#994700,#993f00,#993900,#993300,#992e00,#992a00,#992600,#992200,#991f00,#991c00,#991900,#991600,#991400,#991200)"></i><i style="left:1140px;width:704px;height:8px;top:332px;background:linear-gradient(90deg,#009942,#009940,#00993f,#00993d,#00993b,#009939,#009938,#009935,#009933,#009931,#00992f,#00992c,#00992a,#009927,#009925,#009922,#00991f,#09991b,#199918,#2a9914,#3b9910,#4e990c,#629908,#779904,#8e9900,#998d00,#997a00,#996b00,#995e00,#995300,#994a00,#994200,#993c00,#993500,#993000,#992b00,#992700,#992300,#992000,#991c00,#991900,#991700,#991400,#991200,#991000)"></i><i style="left:1140px;width:704px;height:8px;top:340px;background:linear-gradient(90deg,#009946,#009944,#009943,#009941,#00993f,#00993d,#00993c,#00993a,#009937,#009935,#009933,#009931,#00992e,#00992c,#009929,#009926,#009923,#0d9920,#1d991c,#2e9919,#419915,#549911,#69990c,#7f9908,#979903,#998500,#997300,#996500,#995900,#994e00,#994600,#993e00,#993800,#993200,#992d00,#992800,#992400,#992000,#991d00,#991a00,#991700,#991400,#991200,#991000,#990e00)"></i><i style="left:1140px;width:704px;height:8px;top:348px;background:linear-gradient(90deg,#00994a,#009948,#009947,#009945,#009943,#009942,#009940,#00993e,#00993c,#00993a,#009937,#009935,#009933,#009930,#00992d,#00992b,#009927,#109924,#219921,#33991d,#46991a,#5b9915,#719911,#88990d,#999107,#997d02,#996c00,#995e00,#995300,#994a00,#994100,#993a00,#993400,#992e00,#992a00,#992500,#992100,#991e00,#991b00,#991800,#991500,#991200,#991000,#990e00,#990c00)"></i><i style="left:1140px;width:704px;height:8px;top:356px;background:linear-gradient(90deg,#00994e,#00994d,#00994b,#00994a,#009948,#009946,#009944,#009942,#009940,#00993e,#00993c,#00993a,#009937,#009935,#009932,#00992f,#03992c,#149929,#259926,#389922,#4c991f,#62991b,#799916,#919912,#99880b,#997506,#996501,#995900,#994e00,#994500,#993d00,#993600,#993000,#992b00,#992600,#992200,#991f00,#991b00,#991800,#991500,#991300,#991000,#990e00,#990c00,#990a00)"></i><i style="left:1140px;width:704px;height:8px;top:364px;background:linear-gradient(90deg,#009953,#009951,#009950,#00994e,#00994c,#00994b,#009949,#009947,#009945,#009943,#009941,#00993f,#00993d,#00993a,#009937,#009935,#069932,#17992f,#2a992b,#3e9928,#539924,#6a9920,#82991c,#999617,#997f0f,#996d09,#995f04,#995300,#994900,#994000,#993900,#993200,#992d00,#992800,#992300,#991f00,#991c00,#991900,#991600,#991300,#991000,#990e00,#990c00,#990a00,#990800)"></i><i style="left:1140px;width:704px;height:8px;top:372px;background:linear-gradient(90deg,#009957,#009956,#009954,#009953,#009951,#009950,#00994e,#00994c,#00994a,#009948,#009946,#009944,#009942,#009940,#00993d,#00993a,#099937,#1c9934,#2f9931,#44992e,#5a992a,#729926,#8b9922,#998c1b,#997713,#99660c,#995807,#994d03,#994400,#993c00,#993500,#992f00,#992900,#992500,#992000,#991d00,#991900,#991600,#991300,#991100,#990e00,#990c00,#990a00,#990800,#990700)"></i><i style="left:1140px;width:704px;height:8px;top:380px;background:linear-gradient(90deg,#00995c,#00995b,#009959,#009958,#009956,#009955,#009953,#009952,#009950,#00994e,#00994c,#00994a,#009948,#009945,#009943,#009940,#0d993e,#20993b,#349937,#4a9934,#629930,#7b992c,#969928,#99821e,#996f16,#995f10,#99520a,#994806,#993f02,#993700,#993100,#992b00,#992600,#992100,#991d00,#991a00,#991700,#991400,#991100,#990f00,#990c00,#990a00,#990800,#990600,#990500)"></i><i style="left:1140px;width:704px;height:8px;top:388px;background:linear-gradient(90deg,#009961,#009960,#00995f,#00995d,#00995c,#00995a,#009959,#009957,#009956,#009954,#009952,#009950,#00994e,#00994c,#009949,#009947,#119944,#259941,#3a993e,#51993b,#6a9937,#859933,#99912d,#997922,#99671a,#995813,#994c0d,#994309,#993a05,#993302,#992d00,#992700,#992300,#991e00,#991b00,#991700,#991400,#991100,#990f00,#990c00,#990a00,#990800,#990600,#990500,#990300)"></i><i style="left:1140px;width:704px;height:8px;top:396px;background:linear-gradient(90deg,#009966,#009965,#009964,#009963,#009962,#009960,#00995f,#00995d,#00995c,#00995a,#009958,#009956,#009955,#009952,#009950,#02994e,#15994b,#2a9949,#419946,#599942,#73993f,#90993b,#998630,#997025,#995f1d,#995216,#994710,#993d0b,#993607,#992f04,#992901,#992400,#991f00,#991b00,#991800,#991400,#991200,#990f00,#990c00,#990a00,#990800,#990600,#990500,#990300,#990100)"></i><i style="left:1140px;width:704px;height:8px;top:404px;background:linear-gradient(90deg,#00996c,#00996b,#00996a,#009969,#009968,#009966,#009965,#009964,#009962,#009961,#00995f,#00995d,#00995c,#00995a,#009958,#059955,#1a9953,#309950,#48994e,#62994b,#7d9947,#999643,#997c34,#996829,#995820,#994c19,#994113,#99380e,#99310a,#992b06,#992503,#992000,#991c00,#991800,#991500,#991200,#990f00,#990d00,#990a00,#990800,#990600,#990400,#990300,#990100,#990000)"></i><i style="left:1140px;width:704px;height:8px;top:412px;background:linear-gradient(90deg,#009972,#009971,#009970,#00996f,#00996e,#00996d,#00996c,#00996b,#009969,#009968,#009967,#009965,#009963,#009962,#009960,#09995e,#1f995b,#369959,#4f9957,#6b9954,#899951,#998a46,#997237,#99602c,#995123,#99461c,#993c16,#993411,#992d0c,#992709,#992205,#991d03,#991900,#991500,#991200,#990f00,#990d00,#990a00,#990800,#990600,#990400,#990200,#990100,#990000,#990000)"></i><i style="left:1140px;width:704px;height:8px;top:420px;background:linear-gradient(90deg,#009978,#009978,#009977,#009976,#009975,#009974,#009973,#009972,#009971,#009970,#00996e,#00996d,#00996c,#00996a,#009968,#0e9967,#249965,#3d9963,#589960,#75995e,#95995b,#997f49,#99693a,#99582f,#994b26,#99401e,#993718,#992f13,#99290f,#99230b,#991e07,#991a05,#991602,#991300,#991000,#990d00,#990a00,#990800,#990600,#990400,#990200,#990100,#990000,#990000,#990000)"></i><i style="left:1140px;width:704px;height:8px;top:428px;background:linear-gradient(90deg,#00997f,#00997e,#00997e,#00997d,#00997c,#00997c,#00997b,#00997a,#009979,#009978,#009977,#009976,#009975,#009973,#009972,#129970,#2a996f,#45996d,#61996b,#819969,#999060,#99744c,#99603d,#995132,#994428,#993a21,#99321b,#992b15,#992411,#991f0d,#991b0a,#991707,#991304,#991001,#990d00,#990a00,#990800,#990600,#990400,#990200,#990000,#990000,#990000,#990000,#990000)"></i><i style="left:1140px;width:704px;height:8px;top:436px;background:linear-gradient(90deg,#009986,#009986,#009985,#009985,#009984,#009984,#009983,#009982,#009982,#009981,#009980,#00997f,#00997e,#00997d,#00997c,#17997b,#31997a,#4d9979,#6c9977,#8d9976,#998363,#996a4f,#995840,#994a34,#993e2b,#993523,#992d1d,#992618,#992013,#991c0f,#99170c,#991308,#991006,#990d03,#990a01,#990800,#990600,#990400,#990200,#990000,#990000,#990000,#990000,#990000,#990000)"></i><i style="left:1140px;width:704px;height:8px;top:444px;background:linear-gradient(90deg,#00998e,#00998d,#00998d,#00998d,#00998d,#00998c,#00998c,#00998b,#00998b,#00998b,#00998a,#00998a,#009989,#009989,#049988,#1d9987,#399986,#569986,#779985,#999681,#997766,#996152,#995043,#994337,#99382e,#992f26,#99281f,#99221a,#991d15,#991811,#99140d,#99100a,#990d08,#990a05,#990803,#990501,#990300,#990100,#990000,#990000,#990000,#990000,#990000,#990000,#990000)"></i><i style="left:1140px;width:704px;height:8px;top:452px;background:linear-gradient(90deg,#009996,#009996,#009996,#009996,#009996,#009995,#009995,#009995,#009995,#009995,#009995,#009995,#009995,#009995,#099995,#249994,#419994,#619994,#859994,#998883,#996c68,#995854,#994845,#993c3a,#993230,#992a28,#992322,#991e1c,#991917,#991413,#99110f,#990d0c,#990a09,#990807,#990504,#990302,#990100,#990000,#990000,#990000,#990000,#990000,#990000,#990000,#990000)"></i><i style="left:1140px;width:704px;height:8px;top:460px;background:linear-gradient(90deg,#009499,#009499,#009399,#009399,#009399,#009399,#009399,#009299,#009299,#009299,#009199,#009199,#009199,#009099,#0d9099,#288f99,#458f99,#658e99,#898e99,#997a85,#99616a,#994f57,#994148,#99363c,#992d32,#99252b,#991f24,#991a1e,#991519,#991115,#990e11,#990a0e,#99080b,#990508,#990306,#990104,#990002,#990000,#990000,#990000,#990000,#990000,#990000,#990000,#990000)"></i><i style="left:1140px;width:704px;height:8px;top:468px;background:linear-gradient(90deg,#008c99,#008b99,#008b99,#008a99,#008a99,#008a99,#008999,#008899,#008899,#008799,#008699,#008699,#008599,#008499,#118399,#2b8299,#478199,#668099,#887e99,#996e87,#99576d,#994759,#993a4a,#99303e,#992735,#99212d,#991b26,#991620,#99111b,#990e17,#990a13,#990810,#99050d,#99030a,#990008,#990005,#990003,#990001,#990000,#990000,#990000,#990000,#990000,#990000,#990000)"></i><i style="left:1140px;width:704px;height:8px;top:476px;background:linear-gradient(90deg,#008499,#008399,#008399,#008299,#008199,#008199,#008099,#007f99,#007e99,#007d99,#007c99,#007b99,#007a99,#007999,#157799,#2e7699,#497499,#677299,#887099,#996288,#994e6f,#993f5b,#99334d,#992a41,#992237,#991c2f,#991728,#991222,#990e1d,#990a19,#990715,#990511,#99020e,#99000c,#990009,#990007,#990005,#990003,#990001,#990000,#990000,#990000,#990000,#990000,#990000)"></i><i style="left:1140px;width:704px;height:8px;top:484px;background:linear-gradient(90deg,#007d99,#007c99,#007b99,#007a99,#007999,#007899,#007799,#007699,#007599,#007499,#007299,#007199,#007099,#026e99,#186c99,#316a99,#4b6899,#686699,#876499,#99578a,#994570,#99375e,#992d4f,#992443,#991d39,#991731,#99122a,#990e24,#990b1f,#99071b,#990417,#990213,#990010,#99000d,#99000b,#990008,#990006,#990004,#990002,#990001,#990000,#990000,#990000,#990000,#990000)"></i><i style="left:1140px;width:704px;height:8px;top:492px;background:linear-gradient(90deg,#007599,#007499,#007499,#007299,#007199,#007099,#006f99,#006e99,#006c99,#006b99,#006999,#006899,#006699,#066499,#1c6299,#336099,#4d5d99,#695a99,#875899,#994d8b,#993d72,#993060,#992751,#991f45,#99183b,#991333,#990e2c,#990b26,#990721,#99041c,#990218,#990015,#990012,#99000f,#99000c,#99000a,#990008,#990006,#990004,#990002,#990000,#990000,#990000,#990000,#990000)"></i><i style="left:1140px;width:704px;height:8px;top:500px;background:linear-gradient(90deg,#006f99,#006e99,#006c99,#006b99,#006a99,#006999,#006799,#006699,#006499,#006299,#006199,#005f99,#005d99,#095a99,#1f5899,#365599,#4f5399,#6a5099,#874c99,#99438c,#993474,#992962,#992153,#991a47,#99143d,#990f35,#990b2e,#990728,#990423,#99011e,#99001a,#990016,#990013,#990010,#99000e,#99000b,#990009,#990007,#990005,#990003,#990002,#990000,#990000,#990000,#990000)"></i><i style="left:1140px;width:704px;height:8px;top:508px;background:linear-gradient(90deg,#006899,#006799,#006699,#006499,#006399,#006199,#006099,#005e99,#005c99,#005a99,#005899,#005699,#005499,#0d5199,#214f99,#384c99,#504999,#6a4699,#864299,#993a8e,#992d76,#992363,#991b55,#991449,#990f3f,#990b37,#990730,#99042a,#990125,#990020,#99001c,#990018,#990015,#990012,#99000f,#99000d,#99000a,#990008,#990006,#990005,#990003,#990001,#990000,#990000,#990000)"></i><i style="left:1140px;width:704px;height:8px;top:516px;background:linear-gradient(90deg,#006299,#006099,#005f99,#005d99,#005c99,#005a99,#005899,#005799,#005599,#005399,#005099,#004e99,#004c99,#104999,#244699,#3a4399,#514099,#6b3c99,#863999,#99318f,#992577,#991c65,#991557,#99104b,#990b41,#990739,#990332,#99002c,#990026,#990022,#99001d,#99001a,#990016,#990013,#990010,#99000e,#99000c,#99000a,#990008,#990006,#990004,#990003,#990001,#990000,#990000)"></i><i style="left:1140px;width:704px;height:8px;top:524px;background:linear-gradient(90deg,#005c99,#005a99,#005999,#005799,#005599,#005499,#005299,#005099,#004e99,#004b99,#004999,#004699,#004499,#134199,#273e99,#3c3b99,#533799,#6b3499,#863099,#992990,#991e79,#991667,#991058,#990b4d,#990643,#99033b,#990033,#99002d,#990028,#990023,#99001f,#99001b,#990018,#990015,#990012,#99000f,#99000d,#99000b,#990009,#990007,#990005,#990004,#990002,#990001,#990000)"></i><i style="left:1140px;width:704px;height:8px;top:532px;background:linear-gradient(90deg,#005699,#005499,#005399,#005199,#004f99,#004d99,#004b99,#004999,#004799,#004499,#004299,#003f99,#033c99,#163999,#293699,#3e3399,#542f99,#6c2b99,#862799,#992191,#99187a,#991169,#990b5a,#99064e,#990245,#99003c,#990035,#99002f,#99002a,#990025,#990021,#99001d,#990019,#990016,#990013,#990011,#99000e,#99000c,#99000a,#990008,#990006,#990005,#990003,#990002,#990001)"></i><i style="left:1140px;width:704px;height:8px;top:540px;background:linear-gradient(90deg,#005099,#004e99,#004d99,#004b99,#004999,#004799,#004599,#004399,#004099,#003e99,#003b99,#003899,#063599,#183299,#2b2f99,#402b99,#552899,#6d2399,#851f99,#991992,#99117c,#990b6a,#99065c,#990250,#990046,#99003e,#990037,#990031,#99002b,#990026,#990022,#99001e,#99001b,#990017,#990015,#990012,#990010,#99000d,#99000b,#990009,#990008,#990006,#990004,#990003,#990002)"></i><i style="left:1140px;width:704px;height:8px;top:548px;background:linear-gradient(90deg,#004b99,#004999,#004799,#004599,#004399,#004199,#003f99,#003c99,#003a99,#003799,#003599,#003299,#092f99,#1b2b99,#2d2899,#412499,#562099,#6d1c99,#851899,#991293,#990b7d,#99066c,#99015e,#990052,#990048,#990040,#990039,#990032,#99002d,#990028,#990024,#990020,#99001c,#990019,#990016,#990013,#990011,#99000f,#99000c,#99000b,#990009,#990007,#990005,#990004,#990003)"></i><i style="left:1140px;width:704px;height:8px;top:556px;background:linear-gradient(90deg,#004599,#004499,#004299,#004099,#003e99,#003b99,#003999,#003799,#003499,#003199,#002e99,#002b99,#0c2899,#1d2599,#2f2199,#431e99,#571a99,#6d1599,#851199,#990b94,#99057e,#99006d,#99005f,#990053,#99004a,#990041,#99003a,#990034,#99002e,#990029,#990025,#990021,#99001d,#99001a,#990017,#990015,#990012,#990010,#99000e,#99000c,#99000a,#990008,#990007,#990005,#990004)"></i><i style="left:1140px;width:704px;height:8px;top:564px;background:linear-gradient(90deg,#004099,#003e99,#003c99,#003a99,#003899,#003699,#003399,#003199,#002e99,#002c99,#002999,#002599,#0f2299,#1f1f99,#311b99,#441799,#581399,#6e0f99,#850a99,#990595,#99007f,#99006e,#990061,#990055,#99004b,#990043,#99003c,#990035,#990030,#99002b,#990026,#990022,#99001f,#99001c,#990019,#990016,#990013,#990011,#99000f,#99000d,#99000b,#990009,#990008,#990006,#990005)"></i><i style="left:1140px;width:704px;height:8px;top:572px;background:linear-gradient(90deg,#003c99,#003a99,#003799,#003599,#003399,#003199,#002e99,#002c99,#002999,#002699,#002399,#012099,#111c99,#221999,#331599,#461199,#590d99,#6e0899,#850499,#990096,#990081,#990070,#990062,#990057,#99004d,#990044,#99003d,#990037,#990031,#99002c,#990028,#990024,#990020,#99001d,#99001a,#990017,#990015,#990012,#990010,#99000e,#99000c,#99000a,#990009,#990007,#990006)"></i><i style="left:1140px;width:704px;height:8px;top:580px;background:linear-gradient(90deg,#003799,#003599,#003399,#003099,#002e99,#002c99,#002999,#002699,#002499,#002199,#001e99,#041a99,#141799,#241399,#350f99,#470b99,#5a0799,#6f0399,#840099,#990096,#990082,#990071,#990063,#990058,#99004e,#990046,#99003f,#990038,#990033,#99002e,#990029,#990025,#990021,#99001e,#99001b,#990018,#990016,#990013,#990011,#99000f,#99000d,#99000b,#99000a,#990008,#990007)"></i><i style="left:1140px;width:704px;height:8px;top:588px;background:linear-gradient(90deg,#003299,#003099,#002e99,#002c99,#002999,#002799,#002499,#002199,#001f99,#001b99,#001899,#071599,#161299,#260e99,#370a99,#480699,#5b0299,#6f0099,#840099,#990097,#990083,#990072,#990065,#990059,#990050,#990047,#990040,#99003a,#990034,#99002f,#99002b,#990026,#990023,#99001f,#99001c,#990019,#990017,#990014,#990012,#990010,#99000e,#99000c,#99000b,#990009,#990008)"></i><i style="left:1140px;width:704px;height:8px;top:596px;background:linear-gradient(90deg,#002e99,#002c99,#002999,#002799,#002599,#002299,#001f99,#001d99,#001a99,#001799,#001399,#091099,#180c99,#280999,#380599,#4a0199,#5c0099,#6f0099,#840099,#990098,#990084,#990074,#990066,#99005b,#990051,#990049,#990042,#99003b,#990036,#990030,#99002c,#990028,#990024,#990021,#99001e,#99001b,#990018,#990016,#990013,#990011,#99000f,#99000d,#99000c,#99000a,#990009)"></i><i style="left:1140px;width:704px;height:8px;top:604px;background:linear-gradient(90deg,#002a99,#002799,#002599,#002399,#002099,#001e99,#001b99,#001899,#001599,#001299,#000f99,#0c0b99,#1a0899,#2a0499,#3a0099,#4b0099,#5d0099,#700099,#840099,#990099,#990085,#990075,#990067,#99005c,#990053,#99004a,#990043,#99003d,#990037,#990032,#99002d,#990029,#990025,#990022,#99001f,#99001c,#990019,#990017,#990014,#990012,#990010,#99000e,#99000d,#99000b,#99000a)"></i><i style="left:1140px;width:704px;height:8px;top:612px;background:linear-gradient(90deg,#002599,#002399,#002199,#001e99,#001c99,#001999,#001699,#001399,#001099,#000d99,#000a99,#0e0799,#1c0399,#2b0099,#3b0099,#4c0099,#5e0099,#700099,#840099,#990099,#990086,#990076,#990069,#99005e,#990054,#99004c,#990044,#99003e,#990038,#990033,#99002e,#99002a,#990027,#990023,#990020,#99001d,#99001a,#990018,#990015,#990013,#990011,#99000f,#99000e,#99000c,#99000a)"></i><i style="left:1140px;width:704px;height:8px;top:620px;background:linear-gradient(90deg,#002199,#001f99,#001d99,#001a99,#001899,#001599,#001299,#000f99,#000c99,#000999,#020699,#100299,#1e0099,#2d0099,#3d0099,#4d0099,#5e0099,#700099,#840099,#980099,#990087,#990077,#99006a,#99005f,#990055,#99004d,#990046,#99003f,#990039,#990034,#990030,#99002c,#990028,#990024,#990021,#99001e,#99001b,#990019,#990017,#990014,#990012,#990010,#99000f,#99000d,#99000b)"></i><i style="left:1140px;width:704px;height:8px;top:628px;background:linear-gradient(90deg,#001d99,#001b99,#001999,#001699,#001499,#001199,#000e99,#000b99,#000899,#000599,#050199,#120099,#200099,#2f0099,#3e0099,#4e0099,#5f0099,#710099,#840099,#970099,#990088,#990078,#99006b,#990060,#990057,#99004e,#990047,#990041,#99003b,#990036,#990031,#99002d,#990029,#990025,#990022,#99001f,#99001d,#99001a,#990018,#990015,#990013,#990011,#990010,#99000e,#99000c)"></i><i style="left:1140px;width:704px;height:8px;top:636px;background:linear-gradient(90deg,#001a99,#001799,#001599,#001299,#001099,#000d99,#000a99,#000799,#000499,#000199,#070099,#140099,#220099,#300099,#3f0099,#4f0099,#600099,#710099,#830099,#970099,#990089,#990079,#99006c,#990061,#990058,#99004f,#990048,#990042,#99003c,#990037,#990032,#99002e,#99002a,#990027,#990023,#990020,#99001e,#99001b,#990019,#990016,#990014,#990012,#990011,#99000f,#99000d)"></i><i style="left:1140px;width:704px;height:8px;top:644px;background:linear-gradient(90deg,#001699,#001499,#001199,#000f99,#000c99,#000999,#000699,#000399,#000099,#000099,#090099,#160099,#240099,#320099,#400099,#500099,#600099,#710099,#830099,#960099,#990089,#99007a,#99006d,#990062,#990059,#990051,#990049,#990043,#99003d,#990038,#990033,#99002f,#99002b,#990028,#990024,#990021,#99001f,#99001c,#99001a,#990017,#990015,#990013,#990012,#990010,#99000e)"></i><i style="left:1140px;width:704px;height:8px;top:652px;background:linear-gradient(90deg,#001299,#001099,#000e99,#000b99,#000899,#000599,#000299,#000099,#000099,#000099,#0b0099,#180099,#250099,#330099,#420099,#510099,#610099,#720099,#830099,#960099,#99008a,#99007b,#99006e,#990064,#99005a,#990052,#99004b,#990044,#99003e,#990039,#990035,#990030,#99002c,#990029,#990026,#990023,#990020,#99001d,#99001b,#990018,#990016,#990014,#990012,#990011,#99000f)"></i><i style="left:1140px;width:704px;height:8px;top:660px;background:linear-gradient(90deg,#000f99,#000d99,#000a99,#000799,#000599,#000299,#000099,#000099,#000099,#010099,#0d0099,#1a0099,#270099,#340099,#430099,#520099,#610099,#720099,#830099,#950099,#99008b,#99007c,#990070,#990065,#99005b,#990053,#99004c,#990045,#990040,#99003a,#990036,#990031,#99002e,#99002a,#990027,#990024,#990021,#99001e,#99001c,#990019,#990017,#990015,#990013,#990012,#990010)"></i><i style="left:1140px;width:704px;height:8px;top:668px;background:linear-gradient(90deg,#000c99,#000999,#000799,#000499,#000199,#000099,#000099,#000099,#000099,#030099,#0f0099,#1b0099,#280099,#360099,#440099,#530099,#620099,#720099,#830099,#950099,#99008c,#99007d,#990071,#990066,#99005c,#990054,#99004d,#990047,#990041,#99003c,#990037,#990033,#99002f,#99002b,#990028,#990025,#990022,#99001f,#99001d,#99001a,#990018,#990016,#990014,#990013,#990011)"></i><i style="left:1140px;width:704px;height:8px;top:676px;background:linear-gradient(90deg,#000a99,#000799,#000599,#000299,#000099,#000099,#000099,#000099,#000099,#040099,#100099,#1c0099,#290099,#370099,#440099,#530099,#620099,#720099,#830099,#950099,#99008c,#99007e,#990071,#990066,#99005d,#990055,#99004e,#990047,#990041,#99003c,#990037,#990033,#99002f,#99002c,#990028,#990025,#990022,#990020,#99001d,#99001b,#990019,#990017,#990015,#990013,#990011)"></i><i style="left:1140px;width:704px;height:8px;top:684px;background:linear-gradient(90deg,#000a99,#000799,#000599,#000299,#000099,#000099,#000099,#000099,#000099,#040099,#100099,#1c0099,#290099,#370099,#440099,#530099,#620099,#720099,#830099,#950099,#99008c,#99007e,#990071,#990066,#99005d,#990055,#99004e,#990047,#990041,#99003c,#990037,#990033,#99002f,#99002c,#990028,#990025,#990022,#990020,#99001d,#99001b,#990019,#990017,#990015,#990013,#990011)"></i><i style="left:1140px;width:704px;height:8px;top:692px;background:linear-gradient(90deg,#000a99,#000799,#000599,#000299,#000099,#000099,#000099,#000099,#000099,#040099,#100099,#1c0099,#290099,#370099,#440099,#530099,#620099,#720099,#830099,#950099,#99008c,#99007e,#990071,#990066,#99005d,#990055,#99004e,#990047,#990041,#99003c,#990037,#990033,#99002f,#99002c,#990028,#990025,#990022,#990020,#99001d,#99001b,#990019,#990017,#990015,#990013,#990011)"></i></div></div><div class="cl" style="clip-path:path('M1721.4 457.8 L1423.4 277.6 L1291.9 638.0 Z')"><div class="bl" style="filter:blur(3px)"><style></style><i style="left:1270px;width:480px;height:6px;top:255px;background:linear-gradient(90deg,#00ff21,#00ff1e,#00ff1b,#00ff18,#00ff15,#00ff12,#00ff0e,#00ff0b,#00ff08,#00ff04,#00ff00,#00ff00,#00ff00,#00ff00,#09ff00,#19ff00,#28ff00,#39ff00,#4aff00,#5bff00,#6dff00,#80ff00,#93ff00,#a7ff00,#bcff00,#d2ff00,#e8ff00,#fffe00,#ffe800,#ffd500,#ffc400,#ffb500,#ffa800,#ff9c00,#ff9100,#ff8700,#ff7e00,#ff7600,#ff6e00,#ff6700,#ff6100)"></i><i style="left:1270px;width:480px;height:6px;top:261px;background:linear-gradient(90deg,#00ff24,#00ff21,#00ff1e,#00ff1b,#00ff18,#00ff15,#00ff12,#00ff0e,#00ff0b,#00ff07,#00ff03,#00ff00,#00ff00,#00ff00,#0cff00,#1cff00,#2cff00,#3dff00,#4eff00,#60ff00,#72ff00,#86ff00,#9aff00,#aeff00,#c4ff00,#daff00,#f1ff00,#fff500,#ffe000,#ffcd00,#ffbd00,#ffaf00,#ffa200,#ff9600,#ff8b00,#ff8200,#ff7900,#ff7100,#ff6a00,#ff6300,#ff5d00)"></i><i style="left:1270px;width:480px;height:6px;top:267px;background:linear-gradient(90deg,#00ff28,#00ff25,#00ff22,#00ff1f,#00ff1c,#00ff18,#00ff15,#00ff12,#00ff0e,#00ff0a,#00ff07,#00ff03,#00ff00,#00ff00,#0fff00,#1fff00,#30ff00,#41ff00,#53ff00,#65ff00,#78ff00,#8cff00,#a0ff00,#b6ff00,#ccff00,#e3ff00,#fbff00,#ffec00,#ffd800,#ffc600,#ffb600,#ffa800,#ff9c00,#ff9100,#ff8600,#ff7d00,#ff7500,#ff6d00,#ff6600,#ff5f00,#ff5900)"></i><i style="left:1270px;width:480px;height:6px;top:273px;background:linear-gradient(90deg,#00ff2b,#00ff28,#00ff25,#00ff22,#00ff1f,#00ff1c,#00ff18,#00ff15,#00ff12,#00ff0e,#00ff0a,#00ff06,#00ff02,#03ff00,#13ff00,#23ff00,#34ff00,#45ff00,#58ff00,#6aff00,#7eff00,#92ff00,#a7ff00,#bdff00,#d4ff00,#ecff00,#fffa00,#ffe300,#ffd000,#ffbf00,#ffaf00,#ffa200,#ff9600,#ff8b00,#ff8100,#ff7800,#ff7000,#ff6900,#ff6200,#ff5b00,#ff5600)"></i><i style="left:1270px;width:480px;height:6px;top:279px;background:linear-gradient(90deg,#00ff2f,#00ff2c,#00ff29,#00ff26,#00ff23,#00ff1f,#00ff1c,#00ff19,#00ff15,#00ff11,#00ff0e,#00ff0a,#00ff06,#06ff02,#16ff00,#27ff00,#38ff00,#4aff00,#5dff00,#70ff00,#84ff00,#99ff00,#afff00,#c5ff00,#ddff00,#f5ff00,#fff000,#ffdb00,#ffc800,#ffb700,#ffa900,#ff9c00,#ff9000,#ff8600,#ff7c00,#ff7400,#ff6c00,#ff6500,#ff5e00,#ff5800,#ff5200)"></i><i style="left:1270px;width:480px;height:6px;top:285px;background:linear-gradient(90deg,#00ff32,#00ff2f,#00ff2d,#00ff29,#00ff26,#00ff23,#00ff20,#00ff1c,#00ff19,#00ff15,#00ff11,#00ff0d,#00ff09,#09ff05,#19ff01,#2bff00,#3cff00,#4fff00,#62ff00,#76ff00,#8bff00,#a0ff00,#b6ff00,#ceff00,#e6ff00,#ffff00,#ffe700,#ffd200,#ffc000,#ffb000,#ffa200,#ff9600,#ff8b00,#ff8100,#ff7800,#ff6f00,#ff6700,#ff6000,#ff5a00,#ff5400,#ff4e00)"></i><i style="left:1270px;width:480px;height:6px;top:291px;background:linear-gradient(90deg,#00ff36,#00ff33,#00ff30,#00ff2d,#00ff2a,#00ff27,#00ff24,#00ff20,#00ff1d,#00ff19,#00ff15,#00ff11,#00ff0d,#0cff09,#1dff05,#2fff00,#41ff00,#54ff00,#67ff00,#7cff00,#91ff00,#a7ff00,#beff00,#d7ff00,#f0ff00,#fff500,#ffde00,#ffca00,#ffb900,#ffaa00,#ff9c00,#ff9000,#ff8500,#ff7c00,#ff7300,#ff6b00,#ff6300,#ff5c00,#ff5600,#ff5000,#ff4b00)"></i><i style="left:1270px;width:480px;height:6px;top:297px;background:linear-gradient(90deg,#00ff3a,#00ff37,#00ff34,#00ff31,#00ff2e,#00ff2b,#00ff28,#00ff24,#00ff21,#00ff1d,#00ff19,#00ff15,#00ff11,#0fff0d,#21ff09,#33ff04,#46ff00,#59ff00,#6dff00,#82ff00,#98ff00,#afff00,#c7ff00,#e0ff00,#faff00,#ffeb00,#ffd500,#ffc200,#ffb200,#ffa300,#ff9600,#ff8a00,#ff8000,#ff7700,#ff6e00,#ff6600,#ff5f00,#ff5800,#ff5200,#ff4d00,#ff4800)"></i><i style="left:1270px;width:480px;height:6px;top:303px;background:linear-gradient(90deg,#00ff3e,#00ff3b,#00ff38,#00ff35,#00ff32,#00ff2f,#00ff2c,#00ff28,#00ff25,#00ff21,#00ff1d,#00ff19,#01ff15,#13ff11,#25ff0d,#37ff08,#4aff03,#5fff00,#73ff00,#89ff00,#a0ff00,#b7ff00,#d0ff00,#eaff00,#fffa00,#ffe100,#ffcc00,#ffba00,#ffaa00,#ff9c00,#ff9000,#ff8500,#ff7b00,#ff7200,#ff6900,#ff6200,#ff5b00,#ff5500,#ff4f00,#ff4900,#ff4400)"></i><i style="left:1270px;width:480px;height:6px;top:309px;background:linear-gradient(90deg,#00ff43,#00ff40,#00ff3d,#00ff3a,#00ff37,#00ff33,#00ff30,#00ff2d,#00ff29,#00ff25,#00ff22,#00ff1e,#05ff1a,#16ff15,#29ff11,#3cff0c,#50ff08,#64ff03,#7aff00,#90ff00,#a7ff00,#c0ff00,#d9ff00,#f4ff00,#ffef00,#ffd800,#ffc400,#ffb300,#ffa300,#ff9600,#ff8a00,#ff7f00,#ff7600,#ff6d00,#ff6500,#ff5e00,#ff5700,#ff5100,#ff4b00,#ff4600,#ff4100)"></i><i style="left:1270px;width:480px;height:6px;top:315px;background:linear-gradient(90deg,#00ff47,#00ff44,#00ff41,#00ff3e,#00ff3b,#00ff38,#00ff35,#00ff31,#00ff2e,#00ff2a,#00ff26,#00ff22,#08ff1e,#1aff1a,#2dff15,#41ff11,#55ff0c,#6aff07,#80ff02,#98ff00,#b0ff00,#c9ff00,#e3ff00,#ffff00,#ffe500,#ffcf00,#ffbc00,#ffab00,#ff9d00,#ff9000,#ff8400,#ff7a00,#ff7100,#ff6800,#ff6000,#ff5900,#ff5300,#ff4d00,#ff4700,#ff4200,#ff3e00)"></i><i style="left:1270px;width:480px;height:6px;top:321px;background:linear-gradient(90deg,#00ff4b,#00ff49,#00ff46,#00ff43,#00ff40,#00ff3d,#00ff39,#00ff36,#00ff32,#00ff2f,#00ff2b,#00ff27,#0bff23,#1eff1f,#31ff1a,#46ff15,#5bff11,#71ff0c,#87ff06,#9fff01,#b8ff00,#d2ff00,#eeff00,#fff400,#ffdb00,#ffc600,#ffb400,#ffa400,#ff9600,#ff8a00,#ff7e00,#ff7500,#ff6c00,#ff6300,#ff5c00,#ff5500,#ff4f00,#ff4900,#ff4400,#ff3f00,#ff3a00)"></i><i style="left:1270px;width:480px;height:6px;top:327px;background:linear-gradient(90deg,#00ff50,#00ff4d,#00ff4b,#00ff48,#00ff45,#00ff41,#00ff3e,#00ff3b,#00ff37,#00ff34,#00ff30,#00ff2c,#0fff28,#22ff23,#36ff1f,#4bff1a,#61ff16,#77ff11,#8fff0b,#a8ff06,#c1ff00,#dcff00,#f9ff00,#ffe900,#ffd200,#ffbe00,#ffac00,#ff9d00,#ff8f00,#ff8400,#ff7900,#ff6f00,#ff6700,#ff5f00,#ff5800,#ff5100,#ff4b00,#ff4500,#ff4000,#ff3b00,#ff3700)"></i><i style="left:1270px;width:480px;height:6px;top:333px;background:linear-gradient(90deg,#00ff55,#00ff52,#00ff50,#00ff4d,#00ff4a,#00ff46,#00ff43,#00ff40,#00ff3c,#00ff39,#00ff35,#00ff31,#13ff2d,#27ff29,#3bff24,#51ff1f,#67ff1b,#7eff16,#97ff10,#b0ff0b,#cbff05,#e7ff00,#fff900,#ffdf00,#ffc800,#ffb500,#ffa500,#ff9600,#ff8900,#ff7e00,#ff7300,#ff6a00,#ff6200,#ff5a00,#ff5300,#ff4d00,#ff4700,#ff4200,#ff3d00,#ff3800,#ff3400)"></i><i style="left:1270px;width:480px;height:6px;top:339px;background:linear-gradient(90deg,#00ff5a,#00ff58,#00ff55,#00ff52,#00ff4f,#00ff4c,#00ff48,#00ff45,#00ff42,#00ff3e,#00ff3a,#03ff36,#17ff32,#2bff2e,#40ff2a,#56ff25,#6eff20,#86ff1b,#9fff16,#b9ff10,#d5ff0a,#f2ff04,#ffee00,#ffd500,#ffbf00,#ffad00,#ff9d00,#ff8f00,#ff8300,#ff7800,#ff6e00,#ff6500,#ff5d00,#ff5600,#ff4f00,#ff4900,#ff4300,#ff3e00,#ff3900,#ff3500,#ff3100)"></i><i style="left:1270px;width:480px;height:6px;top:345px;background:linear-gradient(90deg,#00ff60,#00ff5d,#00ff5a,#00ff57,#00ff54,#00ff51,#00ff4e,#00ff4b,#00ff47,#00ff44,#00ff40,#07ff3c,#1bff38,#30ff34,#46ff2f,#5dff2b,#75ff26,#8dff21,#a8ff1b,#c3ff16,#e0ff10,#feff0a,#ffe303,#ffcb00,#ffb700,#ffa500,#ff9600,#ff8900,#ff7d00,#ff7200,#ff6900,#ff6000,#ff5800,#ff5100,#ff4b00,#ff4500,#ff4000,#ff3b00,#ff3600,#ff3200,#ff2e00)"></i><i style="left:1270px;width:480px;height:6px;top:351px;background:linear-gradient(90deg,#00ff65,#00ff63,#00ff60,#00ff5d,#00ff5a,#00ff57,#00ff54,#00ff50,#00ff4d,#00ff49,#00ff46,#0bff42,#20ff3e,#35ff3a,#4cff35,#63ff31,#7cff2c,#96ff27,#b1ff21,#cdff1c,#ecff16,#fff30f,#ffd808,#ffc202,#ffae00,#ff9d00,#ff8f00,#ff8200,#ff7700,#ff6d00,#ff6400,#ff5b00,#ff5400,#ff4d00,#ff4700,#ff4100,#ff3c00,#ff3700,#ff3300,#ff2e00,#ff2b00)"></i><i style="left:1270px;width:480px;height:6px;top:357px;background:linear-gradient(90deg,#00ff6b,#00ff68,#00ff66,#00ff63,#00ff60,#00ff5d,#00ff5a,#00ff57,#00ff53,#00ff50,#00ff4c,#0fff48,#24ff44,#3aff40,#52ff3c,#6aff37,#84ff32,#9fff2d,#bbff28,#d8ff22,#f8ff1c,#ffe814,#ffce0c,#ffb806,#ffa601,#ff9600,#ff8800,#ff7c00,#ff7100,#ff6700,#ff5e00,#ff5700,#ff4f00,#ff4900,#ff4300,#ff3d00,#ff3800,#ff3400,#ff2f00,#ff2b00,#ff2800)"></i><i style="left:1270px;width:480px;height:6px;top:363px;background:linear-gradient(90deg,#00ff71,#00ff6e,#00ff6c,#00ff69,#00ff66,#00ff63,#00ff60,#00ff5d,#00ff5a,#00ff56,#00ff52,#13ff4f,#29ff4b,#40ff47,#58ff42,#71ff3e,#8cff39,#a8ff34,#c5ff2f,#e4ff29,#fff922,#ffdc19,#ffc411,#ffaf0a,#ff9e05,#ff8f00,#ff8100,#ff7600,#ff6b00,#ff6200,#ff5900,#ff5200,#ff4b00,#ff4500,#ff3f00,#ff3a00,#ff3500,#ff3000,#ff2c00,#ff2800,#ff2500)"></i><i style="left:1270px;width:480px;height:6px;top:369px;background:linear-gradient(90deg,#00ff77,#00ff75,#00ff72,#00ff70,#00ff6d,#00ff6a,#00ff67,#00ff64,#00ff60,#00ff5d,#02ff59,#18ff56,#2eff52,#46ff4e,#5fff49,#79ff45,#95ff40,#b2ff3b,#d0ff36,#f1ff30,#ffed27,#ffd11e,#ffba15,#ffa70f,#ff9609,#ff8704,#ff7b00,#ff7000,#ff6600,#ff5d00,#ff5500,#ff4d00,#ff4700,#ff4100,#ff3b00,#ff3600,#ff3100,#ff2d00,#ff2900,#ff2500,#ff2200)"></i><i style="left:1270px;width:480px;height:6px;top:375px;background:linear-gradient(90deg,#00ff7e,#00ff7b,#00ff79,#00ff76,#00ff74,#00ff71,#00ff6e,#00ff6b,#00ff67,#00ff64,#06ff61,#1cff5d,#34ff59,#4cff55,#66ff51,#81ff4c,#9eff48,#bcff43,#dcff3d,#feff38,#ffe02c,#ffc622,#ffb11a,#ff9e13,#ff8e0d,#ff8007,#ff7403,#ff6a00,#ff6000,#ff5700,#ff5000,#ff4900,#ff4200,#ff3d00,#ff3700,#ff3200,#ff2e00,#ff2a00,#ff2600,#ff2200,#ff1f00)"></i><i style="left:1270px;width:480px;height:6px;top:381px;background:linear-gradient(90deg,#00ff85,#00ff82,#00ff80,#00ff7d,#00ff7b,#00ff78,#00ff75,#00ff72,#00ff6f,#00ff6c,#0aff68,#21ff65,#3aff61,#53ff5d,#6eff59,#8aff54,#a8ff50,#c7ff4b,#e9ff46,#fff23d,#ffd531,#ffbc26,#ffa71e,#ff9617,#ff8710,#ff7a0b,#ff6e06,#ff6402,#ff5b00,#ff5200,#ff4b00,#ff4400,#ff3e00,#ff3900,#ff3400,#ff2f00,#ff2a00,#ff2600,#ff2300,#ff1f00,#ff1c00)"></i><i style="left:1270px;width:480px;height:6px;top:387px;background:linear-gradient(90deg,#00ff8c,#00ff8a,#00ff87,#00ff85,#00ff82,#00ff80,#00ff7d,#00ff7a,#00ff77,#00ff74,#0fff70,#27ff6d,#40ff69,#5aff65,#76ff61,#93ff5d,#b3ff58,#d3ff54,#f6ff4e,#ffe542,#ffc935,#ffb22b,#ff9f22,#ff8e1a,#ff8014,#ff730e,#ff6809,#ff5e05,#ff5501,#ff4d00,#ff4600,#ff4000,#ff3a00,#ff3500,#ff3000,#ff2b00,#ff2700,#ff2300,#ff1f00,#ff1c00,#ff1900)"></i><i style="left:1270px;width:480px;height:6px;top:393px;background:linear-gradient(90deg,#00ff93,#00ff91,#00ff8f,#00ff8d,#00ff8a,#00ff88,#00ff85,#00ff82,#00ff7f,#00ff7c,#13ff79,#2cff76,#46ff72,#62ff6e,#7fff6a,#9dff66,#beff62,#e0ff5d,#fff956,#ffd946,#ffbe39,#ffa82f,#ff9626,#ff861e,#ff7818,#ff6c12,#ff620d,#ff5908,#ff5004,#ff4900,#ff4200,#ff3c00,#ff3600,#ff3100,#ff2c00,#ff2800,#ff2400,#ff2000,#ff1c00,#ff1900,#ff1600)"></i><i style="left:1270px;width:480px;height:6px;top:399px;background:linear-gradient(90deg,#00ff9b,#00ff99,#00ff97,#00ff95,#00ff93,#00ff90,#00ff8e,#00ff8b,#00ff88,#00ff85,#18ff82,#32ff7f,#4dff7b,#6aff78,#88ff74,#a8ff70,#caff6c,#eeff67,#ffeb5a,#ffcd4b,#ffb43e,#ff9f33,#ff8d2a,#ff7e22,#ff711b,#ff6615,#ff5c10,#ff530b,#ff4b07,#ff4403,#ff3d00,#ff3700,#ff3200,#ff2d00,#ff2900,#ff2400,#ff2000,#ff1d00,#ff1900,#ff1600,#ff1300)"></i><i style="left:1270px;width:480px;height:6px;top:405px;background:linear-gradient(90deg,#00ffa4,#00ffa2,#00ffa0,#00ff9e,#00ff9b,#00ff99,#00ff97,#00ff94,#00ff92,#05ff8f,#1eff8c,#39ff89,#55ff85,#72ff82,#92ff7e,#b4ff7a,#d7ff76,#fdff72,#ffdd5f,#ffc14f,#ffa942,#ff9637,#ff852d,#ff7725,#ff6b1e,#ff6018,#ff5613,#ff4e0e,#ff460a,#ff3f06,#ff3902,#ff3300,#ff2e00,#ff2900,#ff2500,#ff2100,#ff1d00,#ff1a00,#ff1600,#ff1300,#ff1100)"></i><i style="left:1270px;width:480px;height:6px;top:411px;background:linear-gradient(90deg,#00ffac,#00ffab,#00ffa9,#00ffa7,#00ffa5,#00ffa3,#00ffa0,#00ff9e,#00ff9c,#09ff99,#24ff96,#3fff93,#5dff90,#7cff8d,#9dff89,#c0ff86,#e5ff82,#fff177,#ffd063,#ffb653,#ffa046,#ff8d3a,#ff7d31,#ff7029,#ff6422,#ff5a1b,#ff5116,#ff4811,#ff410d,#ff3b09,#ff3505,#ff2f02,#ff2a00,#ff2600,#ff2100,#ff1e00,#ff1a00,#ff1700,#ff1400,#ff1100,#ff0e00)"></i><i style="left:1270px;width:480px;height:6px;top:417px;background:linear-gradient(90deg,#00ffb6,#00ffb4,#00ffb2,#00ffb0,#00ffaf,#00ffad,#00ffab,#00ffa8,#00ffa6,#0effa4,#2affa1,#47ff9f,#65ff9c,#86ff99,#a8ff95,#cdff92,#f5ff8e,#ffe37b,#ffc467,#ffab57,#ff9649,#ff843e,#ff7634,#ff692c,#ff5e25,#ff541f,#ff4b19,#ff4314,#ff3c0f,#ff360b,#ff3008,#ff2b04,#ff2601,#ff2200,#ff1e00,#ff1a00,#ff1700,#ff1400,#ff1100,#ff0e00,#ff0b00)"></i><i style="left:1270px;width:480px;height:6px;top:423px;background:linear-gradient(90deg,#00ffbf,#00ffbe,#00ffbc,#00ffbb,#00ffb9,#00ffb7,#00ffb5,#00ffb4,#00ffb1,#14ffaf,#30ffad,#4effab,#6effa8,#90ffa5,#b5ffa2,#dcff9f,#fff998,#ffd57f,#ffb86b,#ffa05b,#ff8d4d,#ff7c42,#ff6e38,#ff622f,#ff5728,#ff4e22,#ff461c,#ff3e17,#ff3812,#ff320e,#ff2c0a,#ff2707,#ff2304,#ff1e01,#ff1b00,#ff1700,#ff1400,#ff1100,#ff0e00,#ff0b00,#ff0900)"></i><i style="left:1270px;width:480px;height:6px;top:429px;background:linear-gradient(90deg,#00ffc9,#00ffc8,#00ffc7,#00ffc6,#00ffc4,#00ffc3,#00ffc1,#00ffbf,#00ffbe,#1affbc,#37ffba,#57ffb8,#78ffb5,#9cffb3,#c2ffb0,#ebffae,#ffe99c,#ffc783,#ffac6f,#ff965e,#ff8451,#ff7445,#ff673b,#ff5b33,#ff512b,#ff4825,#ff401f,#ff391a,#ff3315,#ff2d11,#ff280d,#ff2309,#ff1f06,#ff1b03,#ff1700,#ff1400,#ff1100,#ff0e00,#ff0b00,#ff0800,#ff0600)"></i><i style="left:1270px;width:480px;height:6px;top:435px;background:linear-gradient(90deg,#00ffd4,#00ffd3,#00ffd2,#00ffd1,#00ffd0,#00ffcf,#00ffcd,#00ffcc,#03ffcb,#20ffc9,#3fffc7,#60ffc6,#83ffc4,#a9ffc2,#d1ffc0,#fcffbd,#ffd99f,#ffba86,#ffa172,#ff8c62,#ff7b54,#ff6c48,#ff603e,#ff5536,#ff4b2e,#ff4328,#ff3b22,#ff341c,#ff2e17,#ff2913,#ff240f,#ff1f0c,#ff1b08,#ff1705,#ff1402,#ff1100,#ff0e00,#ff0b00,#ff0800,#ff0600,#ff0300)"></i><i style="left:1270px;width:480px;height:6px;top:441px;background:linear-gradient(90deg,#00ffe0,#00ffdf,#00ffde,#00ffdd,#00ffdc,#00ffdc,#00ffdb,#00ffda,#08ffd8,#27ffd7,#47ffd6,#69ffd5,#8effd3,#b6ffd2,#e1ffd0,#fff0c2,#ffcba3,#ffad8a,#ff9676,#ff8265,#ff7257,#ff644c,#ff5942,#ff4e39,#ff4531,#ff3d2a,#ff3624,#ff301f,#ff2a1a,#ff2516,#ff2012,#ff1c0e,#ff180a,#ff1407,#ff1104,#ff0e02,#ff0b00,#ff0800,#ff0500,#ff0300,#ff0100)"></i><i style="left:1270px;width:480px;height:6px;top:447px;background:linear-gradient(90deg,#00ffec,#00ffeb,#00ffeb,#00ffea,#00ffea,#00ffe9,#00ffe9,#00ffe8,#0effe7,#2effe7,#50ffe6,#74ffe5,#9bffe4,#c5ffe3,#f2ffe2,#ffdfc5,#ffbda6,#ffa18d,#ff8b79,#ff7969,#ff6a5b,#ff5d4f,#ff5245,#ff483c,#ff3f34,#ff382d,#ff3127,#ff2b21,#ff261d,#ff2118,#ff1c14,#ff1810,#ff140d,#ff110a,#ff0d07,#ff0a04,#ff0801,#ff0500,#ff0300,#ff0000,#ff0000)"></i><i style="left:1270px;width:480px;height:6px;top:453px;background:linear-gradient(90deg,#00fff9,#00fff9,#00fff8,#00fff8,#00fff8,#00fff8,#00fff8,#00fff8,#14fff8,#36fff7,#59fff7,#80fff7,#a9fff7,#d5fff7,#fff9f0,#ffcfc8,#ffafa9,#ff9690,#ff817c,#ff706c,#ff625e,#ff5652,#ff4b48,#ff423f,#ff3a37,#ff3330,#ff2c2a,#ff2624,#ff211f,#ff1d1a,#ff1816,#ff1412,#ff110f,#ff0d0c,#ff0a09,#ff0706,#ff0503,#ff0201,#ff0000,#ff0000,#ff0000)"></i><i style="left:1270px;width:480px;height:6px;top:459px;background:linear-gradient(90deg,#00f8ff,#00f8ff,#00f7ff,#00f7ff,#00f7ff,#00f6ff,#00f6ff,#00f6ff,#1af5ff,#3cf5ff,#5ff4ff,#86f4ff,#aff3ff,#dcf3ff,#ffe6f2,#ffc0ca,#ffa2ac,#ff8b93,#ff787f,#ff686f,#ff5a61,#ff4f55,#ff454b,#ff3c42,#ff343a,#ff2e33,#ff272c,#ff2227,#ff1d21,#ff191d,#ff1419,#ff1115,#ff0d11,#ff0a0e,#ff070b,#ff0408,#ff0205,#ff0003,#ff0000,#ff0000,#ff0000)"></i><i style="left:1270px;width:480px;height:6px;top:465px;background:linear-gradient(90deg,#00ebff,#00eaff,#00e9ff,#00e9ff,#00e8ff,#00e7ff,#00e7ff,#00e6ff,#1fe5ff,#40e4ff,#63e3ff,#88e2ff,#b1e1ff,#dcdfff,#ffd4f4,#ffb1cd,#ff96af,#ff8096,#ff6e82,#ff5f72,#ff5364,#ff4858,#ff3e4d,#ff3644,#ff2f3c,#ff2935,#ff232f,#ff1e29,#ff1924,#ff151f,#ff111b,#ff0d17,#ff0a13,#ff0710,#ff040d,#ff010a,#ff0007,#ff0005,#ff0002,#ff0000,#ff0000)"></i><i style="left:1270px;width:480px;height:6px;top:471px;background:linear-gradient(90deg,#00deff,#00ddff,#00dcff,#00dbff,#00daff,#00d9ff,#00d8ff,#06d7ff,#24d5ff,#44d4ff,#66d2ff,#8ad1ff,#b2cfff,#dccdff,#ffc3f5,#ffa3cf,#ff8ab1,#ff7699,#ff6585,#ff5775,#ff4b67,#ff415b,#ff3850,#ff3147,#ff2a3f,#ff2438,#ff1e31,#ff192b,#ff1526,#ff1121,#ff0d1d,#ff0a19,#ff0715,#ff0412,#ff010f,#ff000c,#ff0009,#ff0006,#ff0004,#ff0002,#ff0000)"></i><i style="left:1270px;width:480px;height:6px;top:477px;background:linear-gradient(90deg,#00d2ff,#00d1ff,#00d0ff,#00ceff,#00cdff,#00cbff,#00caff,#0bc8ff,#28c6ff,#47c5ff,#69c3ff,#8cc1ff,#b2beff,#dbbcff,#ffb3f7,#ff96d1,#ff7eb4,#ff6c9c,#ff5c88,#ff4f78,#ff446a,#ff3b5d,#ff3253,#ff2b4a,#ff2542,#ff1f3a,#ff1a34,#ff152e,#ff1129,#ff0d24,#ff091f,#ff061b,#ff0317,#ff0114,#ff0011,#ff000e,#ff000b,#ff0008,#ff0006,#ff0004,#ff0001)"></i><i style="left:1270px;width:480px;height:6px;top:483px;background:linear-gradient(90deg,#00c6ff,#00c5ff,#00c3ff,#00c2ff,#00c0ff,#00beff,#00bdff,#0fbbff,#2cb8ff,#4bb6ff,#6cb4ff,#8eb1ff,#b3afff,#dbacff,#ffa4f9,#ff89d4,#ff73b6,#ff629f,#ff548b,#ff477a,#ff3d6c,#ff3460,#ff2c56,#ff264c,#ff1f44,#ff1a3d,#ff1536,#ff1130,#ff0d2b,#ff0926,#ff0621,#ff031d,#ff0019,#ff0016,#ff0013,#ff0010,#ff000d,#ff000a,#ff0008,#ff0005,#ff0003)"></i><i style="left:1270px;width:480px;height:6px;top:489px;background:linear-gradient(90deg,#00bbff,#00baff,#00b8ff,#00b6ff,#00b4ff,#00b2ff,#00b0ff,#14adff,#30abff,#4ea8ff,#6ea6ff,#90a3ff,#b4a0ff,#db9cff,#ff96fa,#ff7dd6,#ff69b9,#ff59a1,#ff4b8e,#ff407d,#ff366f,#ff2e63,#ff2758,#ff204f,#ff1a47,#ff153f,#ff1139,#ff0d32,#ff092d,#ff0628,#ff0223,#ff001f,#ff001b,#ff0018,#ff0015,#ff0011,#ff000f,#ff000c,#ff0009,#ff0007,#ff0005)"></i><i style="left:1270px;width:480px;height:6px;top:495px;background:linear-gradient(90deg,#00b1ff,#00afff,#00adff,#00abff,#00a8ff,#00a6ff,#00a4ff,#18a1ff,#349eff,#519bff,#7198ff,#9295ff,#b592ff,#db8eff,#ff88fb,#ff71d8,#ff5fbb,#ff50a4,#ff4390,#ff3980,#ff3072,#ff2865,#ff215b,#ff1b51,#ff1649,#ff1142,#ff0d3b,#ff0935,#ff052f,#ff022a,#ff0026,#ff0021,#ff001d,#ff001a,#ff0016,#ff0013,#ff0010,#ff000e,#ff000b,#ff0009,#ff0006)"></i><i style="left:1270px;width:480px;height:6px;top:501px;background:linear-gradient(90deg,#00a6ff,#00a4ff,#00a2ff,#00a0ff,#009dff,#009bff,#0398ff,#1c95ff,#3892ff,#548fff,#738cff,#9388ff,#b684ff,#da80ff,#ff7bfd,#ff66d9,#ff55bd,#ff47a6,#ff3b93,#ff3282,#ff2974,#ff2268,#ff1c5d,#ff1654,#ff114b,#ff0c44,#ff083d,#ff0537,#ff0131,#ff002c,#ff0028,#ff0023,#ff001f,#ff001c,#ff0018,#ff0015,#ff0012,#ff000f,#ff000d,#ff000a,#ff0008)"></i><i style="left:1270px;width:480px;height:6px;top:507px;background:linear-gradient(90deg,#009cff,#009aff,#0098ff,#0095ff,#0093ff,#0090ff,#078dff,#208aff,#3b87ff,#5783ff,#757fff,#957cff,#b678ff,#da73ff,#ff6efe,#ff5bdb,#ff4bbf,#ff3fa8,#ff3495,#ff2b85,#ff2377,#ff1c6a,#ff1660,#ff1156,#ff0c4e,#ff0846,#ff043f,#ff0139,#ff0034,#ff002e,#ff002a,#ff0025,#ff0021,#ff001e,#ff001a,#ff0017,#ff0014,#ff0011,#ff000e,#ff000c,#ff000a)"></i><i style="left:1270px;width:480px;height:6px;top:513px;background:linear-gradient(90deg,#0093ff,#0090ff,#008eff,#008bff,#0088ff,#0085ff,#0b82ff,#247fff,#3e7bff,#5a78ff,#7774ff,#9670ff,#b76bff,#da67ff,#ff62ff,#ff50dd,#ff42c1,#ff36ab,#ff2d97,#ff2487,#ff1d79,#ff176d,#ff1162,#ff0c59,#ff0850,#ff0448,#ff0042,#ff003b,#ff0036,#ff0030,#ff002c,#ff0027,#ff0023,#ff001f,#ff001c,#ff0019,#ff0016,#ff0013,#ff0010,#ff000e,#ff000b)"></i><i style="left:1270px;width:480px;height:6px;top:519px;background:linear-gradient(90deg,#008aff,#0087ff,#0084ff,#0081ff,#007eff,#007bff,#0f78ff,#2874ff,#4271ff,#5d6dff,#7969ff,#9865ff,#b860ff,#da5bff,#fe56ff,#ff46df,#ff39c3,#ff2ead,#ff259a,#ff1e89,#ff177b,#ff116f,#ff0c64,#ff075b,#ff0352,#ff004b,#ff0044,#ff003d,#ff0038,#ff0032,#ff002e,#ff0029,#ff0025,#ff0021,#ff001e,#ff001a,#ff0017,#ff0014,#ff0012,#ff000f,#ff000d)"></i><i style="left:1270px;width:480px;height:6px;top:525px;background:linear-gradient(90deg,#0081ff,#007eff,#007bff,#0078ff,#0075ff,#0072ff,#136eff,#2b6aff,#4567ff,#5f63ff,#7b5eff,#995aff,#b855ff,#da50ff,#fd4bff,#ff3de0,#ff31c5,#ff27af,#ff1e9c,#ff178c,#ff117e,#ff0c71,#ff0767,#ff035d,#ff0054,#ff004d,#ff0046,#ff003f,#ff003a,#ff0034,#ff0030,#ff002b,#ff0027,#ff0023,#ff001f,#ff001c,#ff0019,#ff0016,#ff0013,#ff0011,#ff000e)"></i><i style="left:1270px;width:480px;height:6px;top:531px;background:linear-gradient(90deg,#0078ff,#0075ff,#0072ff,#006fff,#006cff,#0068ff,#1765ff,#2f61ff,#485dff,#6259ff,#7d54ff,#9a50ff,#b94bff,#d945ff,#fc40ff,#ff33e2,#ff29c7,#ff1fb1,#ff189e,#ff118e,#ff0b80,#ff0674,#ff0269,#ff005f,#ff0057,#ff004f,#ff0048,#ff0042,#ff003c,#ff0036,#ff0031,#ff002d,#ff0029,#ff0025,#ff0021,#ff001e,#ff001b,#ff0018,#ff0015,#ff0012,#ff0010)"></i><i style="left:1270px;width:480px;height:6px;top:537px;background:linear-gradient(90deg,#0070ff,#006dff,#006aff,#0066ff,#0063ff,#045fff,#1b5cff,#3258ff,#4a53ff,#644fff,#7f4bff,#9c46ff,#ba41ff,#d93bff,#fb36ff,#ff2ae3,#ff21c9,#ff18b3,#ff11a0,#ff0b90,#ff0682,#ff0176,#ff006b,#ff0061,#ff0059,#ff0051,#ff004a,#ff0044,#ff003e,#ff0038,#ff0033,#ff002f,#ff002b,#ff0027,#ff0023,#ff0020,#ff001c,#ff0019,#ff0017,#ff0014,#ff0011)"></i><i style="left:1270px;width:480px;height:6px;top:543px;background:linear-gradient(90deg,#0068ff,#0065ff,#0061ff,#005eff,#005aff,#0857ff,#1e53ff,#354fff,#4d4aff,#6646ff,#8141ff,#9d3cff,#ba37ff,#d932ff,#fa2cff,#ff22e5,#ff19cb,#ff11b5,#ff0ba2,#ff0592,#ff0084,#ff0078,#ff006d,#ff0063,#ff005b,#ff0053,#ff004c,#ff0045,#ff0040,#ff003a,#ff0035,#ff0031,#ff002c,#ff0028,#ff0025,#ff0021,#ff001e,#ff001b,#ff0018,#ff0015,#ff0013)"></i><i style="left:1270px;width:480px;height:6px;top:549px;background:linear-gradient(90deg,#0060ff,#005dff,#0059ff,#0056ff,#0052ff,#0c4eff,#214aff,#3846ff,#5042ff,#683dff,#8238ff,#9e33ff,#bb2eff,#d928ff,#f922ff,#ff19e6,#ff11cc,#ff0ab7,#ff05a4,#ff0094,#ff0086,#ff007a,#ff006f,#ff0066,#ff005d,#ff0055,#ff004e,#ff0047,#ff0042,#ff003c,#ff0037,#ff0032,#ff002e,#ff002a,#ff0026,#ff0023,#ff0020,#ff001d,#ff001a,#ff0017,#ff0014)"></i><i style="left:1270px;width:480px;height:6px;top:555px;background:linear-gradient(90deg,#0059ff,#0055ff,#0052ff,#004eff,#004aff,#0f46ff,#2542ff,#3b3eff,#523aff,#6b35ff,#8430ff,#9f2bff,#bb25ff,#d920ff,#f819ff,#ff11e8,#ff0ace,#ff04b8,#ff00a6,#ff0096,#ff0088,#ff007c,#ff0071,#ff0068,#ff005f,#ff0057,#ff0050,#ff0049,#ff0043,#ff003e,#ff0039,#ff0034,#ff0030,#ff002c,#ff0028,#ff0024,#ff0021,#ff001e,#ff001b,#ff0018,#ff0016)"></i><i style="left:1270px;width:480px;height:6px;top:561px;background:linear-gradient(90deg,#0051ff,#004eff,#004aff,#0047ff,#0043ff,#133fff,#283aff,#3e36ff,#5532ff,#6c2dff,#8628ff,#a022ff,#bc1dff,#d917ff,#f711ff,#ff0ae9,#ff03d0,#ff00ba,#ff00a8,#ff0098,#ff008a,#ff007e,#ff0073,#ff006a,#ff0061,#ff0059,#ff0052,#ff004b,#ff0045,#ff0040,#ff003b,#ff0036,#ff0032,#ff002d,#ff002a,#ff0026,#ff0023,#ff0020,#ff001d,#ff001a,#ff0017)"></i><i style="left:1270px;width:480px;height:6px;top:567px;background:linear-gradient(90deg,#004aff,#0047ff,#0043ff,#003fff,#023bff,#1637ff,#2b33ff,#402eff,#572aff,#6e25ff,#8720ff,#a11aff,#bc15ff,#d80fff,#f609ff,#ff02ea,#ff00d1,#ff00bc,#ff00aa,#ff009a,#ff008c,#ff0080,#ff0075,#ff006c,#ff0063,#ff005b,#ff0054,#ff004d,#ff0047,#ff0041,#ff003c,#ff0038,#ff0033,#ff002f,#ff002b,#ff0028,#ff0024,#ff0021,#ff001e,#ff001b,#ff0019)"></i><i style="left:1270px;width:480px;height:6px;top:573px;background:linear-gradient(90deg,#0043ff,#0040ff,#003cff,#0038ff,#0634ff,#1930ff,#2e2cff,#4327ff,#5922ff,#701dff,#8818ff,#a213ff,#bc0dff,#d807ff,#f601ff,#ff00eb,#ff00d3,#ff00be,#ff00ac,#ff009c,#ff008e,#ff0082,#ff0077,#ff006d,#ff0065,#ff005d,#ff0055,#ff004f,#ff0049,#ff0043,#ff003e,#ff0039,#ff0035,#ff0031,#ff002d,#ff0029,#ff0026,#ff0023,#ff0020,#ff001d,#ff001a)"></i><i style="left:1270px;width:480px;height:6px;top:579px;background:linear-gradient(90deg,#003dff,#0039ff,#0035ff,#0031ff,#092dff,#1c29ff,#3025ff,#4520ff,#5b1bff,#7216ff,#8a11ff,#a30bff,#bd06ff,#d800ff,#f500ff,#ff00ec,#ff00d4,#ff00bf,#ff00ad,#ff009e,#ff0090,#ff0084,#ff0079,#ff006f,#ff0067,#ff005f,#ff0057,#ff0051,#ff004b,#ff0045,#ff0040,#ff003b,#ff0037,#ff0032,#ff002e,#ff002b,#ff0027,#ff0024,#ff0021,#ff001e,#ff001c)"></i><i style="left:1270px;width:480px;height:6px;top:585px;background:linear-gradient(90deg,#0036ff,#0033ff,#002fff,#002bff,#0c27ff,#1f22ff,#331eff,#4819ff,#5d14ff,#740fff,#8b0aff,#a404ff,#bd00ff,#d800ff,#f400ff,#ff00ee,#ff00d5,#ff00c1,#ff00af,#ff009f,#ff0092,#ff0086,#ff007b,#ff0071,#ff0068,#ff0060,#ff0059,#ff0052,#ff004c,#ff0047,#ff0041,#ff003d,#ff0038,#ff0034,#ff0030,#ff002c,#ff0029,#ff0026,#ff0023,#ff0020,#ff001d)"></i><i style="left:1270px;width:480px;height:6px;top:591px;background:linear-gradient(90deg,#0030ff,#002cff,#0028ff,#0024ff,#0f20ff,#221cff,#3617ff,#4a13ff,#5f0eff,#7508ff,#8c03ff,#a400ff,#be00ff,#d800ff,#f300ff,#ff00ef,#ff00d7,#ff00c2,#ff00b1,#ff00a1,#ff0094,#ff0087,#ff007d,#ff0073,#ff006a,#ff0062,#ff005b,#ff0054,#ff004e,#ff0048,#ff0043,#ff003e,#ff003a,#ff0036,#ff0032,#ff002e,#ff002a,#ff0027,#ff0024,#ff0021,#ff001e)"></i><i style="left:1270px;width:480px;height:6px;top:597px;background:linear-gradient(90deg,#002aff,#0026ff,#0022ff,#001eff,#121aff,#2516ff,#3811ff,#4c0cff,#6107ff,#7702ff,#8e00ff,#a500ff,#be00ff,#d800ff,#f300ff,#ff00f0,#ff00d8,#ff00c4,#ff00b2,#ff00a3,#ff0095,#ff0089,#ff007e,#ff0075,#ff006c,#ff0064,#ff005d,#ff0056,#ff0050,#ff004a,#ff0045,#ff0040,#ff003b,#ff0037,#ff0033,#ff002f,#ff002c,#ff0029,#ff0025,#ff0023,#ff0020)"></i><i style="left:1270px;width:480px;height:6px;top:603px;background:linear-gradient(90deg,#0024ff,#0020ff,#001cff,#0418ff,#1514ff,#280fff,#3b0bff,#4e06ff,#6301ff,#7800ff,#8f00ff,#a600ff,#be00ff,#d800ff,#f200ff,#ff00f1,#ff00d9,#ff00c5,#ff00b4,#ff00a5,#ff0097,#ff008b,#ff0080,#ff0076,#ff006e,#ff0066,#ff005e,#ff0058,#ff0051,#ff004c,#ff0046,#ff0041,#ff003d,#ff0039,#ff0035,#ff0031,#ff002d,#ff002a,#ff0027,#ff0024,#ff0021)"></i><i style="left:1270px;width:480px;height:6px;top:609px;background:linear-gradient(90deg,#001fff,#001bff,#0017ff,#0712ff,#180eff,#2a09ff,#3d05ff,#5100ff,#6500ff,#7a00ff,#9000ff,#a700ff,#bf00ff,#d800ff,#f200ff,#ff00f2,#ff00db,#ff00c7,#ff00b5,#ff00a6,#ff0099,#ff008d,#ff0082,#ff0078,#ff006f,#ff0067,#ff0060,#ff0059,#ff0053,#ff004d,#ff0048,#ff0043,#ff003e,#ff003a,#ff0036,#ff0032,#ff002f,#ff002b,#ff0028,#ff0025,#ff0022)"></i><i style="left:1270px;width:480px;height:6px;top:615px;background:linear-gradient(90deg,#0019ff,#0015ff,#0011ff,#0a0dff,#1b08ff,#2d04ff,#3f00ff,#5300ff,#6700ff,#7b00ff,#9100ff,#a800ff,#bf00ff,#d800ff,#f100ff,#ff00f3,#ff00dc,#ff00c8,#ff00b7,#ff00a8,#ff009a,#ff008e,#ff0084,#ff007a,#ff0071,#ff0069,#ff0062,#ff005b,#ff0055,#ff004f,#ff004a,#ff0045,#ff0040,#ff003c,#ff0038,#ff0034,#ff0030,#ff002d,#ff002a,#ff0027,#ff0024)"></i><i style="left:1270px;width:480px;height:6px;top:621px;background:linear-gradient(90deg,#0014ff,#0010ff,#000bff,#0c07ff,#1e03ff,#2f00ff,#4200ff,#5500ff,#6800ff,#7d00ff,#9200ff,#a800ff,#bf00ff,#d700ff,#f100ff,#ff00f4,#ff00dd,#ff00c9,#ff00b8,#ff00a9,#ff009c,#ff0090,#ff0085,#ff007b,#ff0073,#ff006b,#ff0063,#ff005c,#ff0056,#ff0050,#ff004b,#ff0046,#ff0041,#ff003d,#ff0039,#ff0035,#ff0032,#ff002e,#ff002b,#ff0028,#ff0025)"></i><i style="left:1270px;width:480px;height:6px;top:627px;background:linear-gradient(90deg,#000eff,#000aff,#0006ff,#0f02ff,#2000ff,#3200ff,#4400ff,#5600ff,#6a00ff,#7e00ff,#9300ff,#a900ff,#c000ff,#d700ff,#f000ff,#ff00f5,#ff00de,#ff00cb,#ff00ba,#ff00ab,#ff009d,#ff0092,#ff0087,#ff007d,#ff0074,#ff006c,#ff0065,#ff005e,#ff0058,#ff0052,#ff004d,#ff0048,#ff0043,#ff003f,#ff003a,#ff0037,#ff0033,#ff0030,#ff002c,#ff0029,#ff0026)"></i><i style="left:1270px;width:480px;height:6px;top:633px;background:linear-gradient(90deg,#0009ff,#0005ff,#0201ff,#1200ff,#2300ff,#3400ff,#4600ff,#5800ff,#6c00ff,#7f00ff,#9400ff,#aa00ff,#c000ff,#d700ff,#ef00ff,#ff00f6,#ff00df,#ff00cc,#ff00bb,#ff00ac,#ff009f,#ff0093,#ff0088,#ff007f,#ff0076,#ff006e,#ff0066,#ff0060,#ff0059,#ff0054,#ff004e,#ff0049,#ff0044,#ff0040,#ff003c,#ff0038,#ff0034,#ff0031,#ff002e,#ff002b,#ff0028)"></i><i style="left:1270px;width:480px;height:6px;top:639px;background:linear-gradient(90deg,#0004ff,#0000ff,#0500ff,#1500ff,#2500ff,#3600ff,#4800ff,#5a00ff,#6d00ff,#8100ff,#9500ff,#aa00ff,#c000ff,#d700ff,#ef00ff,#ff00f7,#ff00e0,#ff00cd,#ff00bd,#ff00ae,#ff00a0,#ff0095,#ff008a,#ff0080,#ff0077,#ff006f,#ff0068,#ff0061,#ff005b,#ff0055,#ff0050,#ff004b,#ff0046,#ff0041,#ff003d,#ff0039,#ff0036,#ff0032,#ff002f,#ff002c,#ff0029)"></i><i style="left:1270px;width:480px;height:6px;top:645px;background:linear-gradient(90deg,#0000ff,#0000ff,#0700ff,#1700ff,#2700ff,#3800ff,#4a00ff,#5c00ff,#6f00ff,#8200ff,#9600ff,#ab00ff,#c100ff,#d700ff,#ee00ff,#ff00f7,#ff00e2,#ff00cf,#ff00be,#ff00af,#ff00a2,#ff0096,#ff008b,#ff0082,#ff0079,#ff0071,#ff006a,#ff0063,#ff005c,#ff0057,#ff0051,#ff004c,#ff0047,#ff0043,#ff003f,#ff003b,#ff0037,#ff0034,#ff0030,#ff002d,#ff002a)"></i><i style="left:1270px;width:480px;height:6px;top:651px;background:linear-gradient(90deg,#0000ff,#0000ff,#0a00ff,#1a00ff,#2a00ff,#3a00ff,#4c00ff,#5e00ff,#7000ff,#8300ff,#9700ff,#ab00ff,#c100ff,#d700ff,#ee00ff,#ff00f8,#ff00e3,#ff00d0,#ff00bf,#ff00b1,#ff00a3,#ff0098,#ff008d,#ff0083,#ff007b,#ff0072,#ff006b,#ff0064,#ff005e,#ff0058,#ff0053,#ff004d,#ff0049,#ff0044,#ff0040,#ff003c,#ff0038,#ff0035,#ff0032,#ff002f,#ff002c)"></i><i style="left:1270px;width:480px;height:6px;top:657px;background:linear-gradient(90deg,#0000ff,#0000ff,#0d00ff,#1c00ff,#2c00ff,#3d00ff,#4e00ff,#5f00ff,#7100ff,#8400ff,#9800ff,#ac00ff,#c100ff,#d700ff,#ee00ff,#ff00f9,#ff00e4,#ff00d1,#ff00c0,#ff00b2,#ff00a5,#ff0099,#ff008e,#ff0085,#ff007c,#ff0074,#ff006d,#ff0066,#ff005f,#ff0059,#ff0054,#ff004f,#ff004a,#ff0046,#ff0041,#ff003e,#ff003a,#ff0036,#ff0033,#ff0030,#ff002d)"></i></div></div>
<div class="cl" style="clip-path:path('M1643.3 125 L1890.7 125 L1890.7 312.2 L1643.3 147.1 Z')"><div class="bl" style="filter:blur(4px)"><style></style><i style="left:1620px;width:304px;height:8px;top:100px;background:linear-gradient(90deg,#649900,#689900,#6b9900,#6e9900,#729900,#759900,#799900,#7c9900,#809900,#849900,#879900,#8b9900,#8f9900,#939900,#969900,#999800,#999400,#999000,#998d00,#998a00)"></i><i style="left:1620px;width:304px;height:8px;top:108px;background:linear-gradient(90deg,#659900,#699900,#6c9900,#709900,#739900,#769900,#7a9900,#7e9900,#819900,#859900,#899900,#8c9900,#909900,#949900,#989900,#999600,#999300,#998f00,#998c00,#998800)"></i><i style="left:1620px;width:304px;height:8px;top:116px;background:linear-gradient(90deg,#669900,#6a9900,#6d9900,#719900,#749900,#789900,#7b9900,#7f9900,#829900,#869900,#8a9900,#8e9900,#919900,#959900,#999900,#999500,#999100,#998e00,#998a00,#998700)"></i><i style="left:1620px;width:304px;height:8px;top:124px;background:linear-gradient(90deg,#679900,#6b9900,#6e9900,#729900,#759900,#799900,#7c9900,#809900,#849900,#879900,#8b9900,#8f9900,#939900,#979900,#999700,#999400,#999000,#998d00,#998900,#998600)"></i><i style="left:1620px;width:304px;height:8px;top:132px;background:linear-gradient(90deg,#689900,#6c9900,#6f9900,#739900,#769900,#7a9900,#7e9900,#819900,#859900,#899900,#8c9900,#909900,#949900,#989900,#999600,#999200,#998f00,#998b00,#998800,#998500)"></i><i style="left:1620px;width:304px;height:8px;top:140px;background:linear-gradient(90deg,#699901,#6d9900,#709900,#749900,#789900,#7b9900,#7f9900,#839900,#869900,#8a9900,#8e9900,#929900,#969900,#999900,#999500,#999100,#998d00,#998a00,#998700,#998300)"></i><i style="left:1620px;width:304px;height:8px;top:148px;background:linear-gradient(90deg,#6b9902,#6e9901,#729900,#759900,#799900,#7c9900,#809900,#849900,#889900,#8b9900,#8f9900,#939900,#979900,#999700,#999300,#999000,#998c00,#998900,#998500,#998200)"></i><i style="left:1620px;width:304px;height:8px;top:156px;background:linear-gradient(90deg,#6c9902,#6f9901,#739901,#769900,#7a9900,#7e9900,#819900,#859900,#899900,#8d9900,#919900,#949900,#989900,#999600,#999200,#998e00,#998b00,#998700,#998400,#998100)"></i><i style="left:1620px;width:304px;height:8px;top:164px;background:linear-gradient(90deg,#6d9903,#709902,#749901,#779900,#7b9900,#7f9900,#839900,#869900,#8a9900,#8e9900,#929900,#969900,#999800,#999400,#999100,#998d00,#998a00,#998600,#998300,#998000)"></i><i style="left:1620px;width:304px;height:8px;top:172px;background:linear-gradient(90deg,#6e9903,#719903,#759902,#799901,#7c9900,#809900,#849900,#889900,#8b9900,#8f9900,#939900,#979900,#999700,#999300,#998f00,#998c00,#998800,#998500,#998200,#997f00)"></i><i style="left:1620px;width:304px;height:8px;top:180px;background:linear-gradient(90deg,#6f9904,#739903,#769902,#7a9902,#7e9901,#819900,#859900,#899900,#8d9900,#919900,#959900,#999900,#999500,#999200,#998e00,#998a00,#998700,#998400,#998100,#997e00)"></i><i style="left:1620px;width:304px;height:8px;top:188px;background:linear-gradient(90deg,#709905,#749904,#779903,#7b9902,#7f9901,#839901,#869900,#8a9900,#8e9900,#929900,#969900,#999800,#999400,#999000,#998d00,#998900,#998600,#998300,#997f00,#997c00)"></i><i style="left:1620px;width:304px;height:8px;top:196px;background:linear-gradient(90deg,#719905,#759904,#799904,#7c9903,#809902,#849901,#889900,#8c9900,#909900,#949900,#989900,#999600,#999300,#998f00,#998b00,#998800,#998400,#998100,#997e00,#997b00)"></i><i style="left:1620px;width:304px;height:8px;top:204px;background:linear-gradient(90deg,#729906,#769905,#7a9904,#7e9903,#819903,#859902,#899901,#8d9900,#919900,#959900,#999900,#999500,#999100,#998d00,#998a00,#998700,#998300,#998000,#997d00,#997a00)"></i><i style="left:1620px;width:304px;height:8px;top:212px;background:linear-gradient(90deg,#749906,#779906,#7b9905,#7f9904,#839903,#869902,#8a9902,#8e9901,#929900,#969900,#999800,#999400,#999000,#998c00,#998900,#998500,#998200,#997f00,#997c00,#997900)"></i><i style="left:1620px;width:304px;height:8px;top:220px;background:linear-gradient(90deg,#759907,#789906,#7c9906,#809905,#849904,#889903,#8c9902,#909901,#949901,#989900,#999600,#999200,#998e00,#998b00,#998700,#998400,#998100,#997e00,#997b00,#997800)"></i><i style="left:1620px;width:304px;height:8px;top:228px;background:linear-gradient(90deg,#769908,#7a9907,#7e9906,#819905,#859905,#899904,#8d9903,#919902,#959901,#999900,#999500,#999100,#998d00,#998900,#998600,#998300,#998000,#997c00,#997a00,#997700)"></i><i style="left:1620px;width:304px;height:8px;top:236px;background:linear-gradient(90deg,#779908,#7b9908,#7f9907,#839906,#879905,#8b9904,#8f9904,#939903,#979902,#999701,#999300,#998f00,#998c00,#998800,#998500,#998100,#997e00,#997b00,#997800,#997600)"></i><i style="left:1620px;width:304px;height:8px;top:244px;background:linear-gradient(90deg,#789909,#7c9908,#809908,#849907,#889906,#8c9905,#909904,#949903,#989903,#999602,#999201,#998e00,#998a00,#998700,#998300,#998000,#997d00,#997a00,#997700,#997400)"></i><i style="left:1620px;width:304px;height:8px;top:252px;background:linear-gradient(90deg,#7a990a,#7d9909,#819908,#859907,#899907,#8d9906,#919905,#969904,#999803,#999402,#999001,#998d01,#998900,#998600,#998200,#997f00,#997c00,#997900,#997600,#997300)"></i><i style="left:1620px;width:304px;height:8px;top:260px;background:linear-gradient(90deg,#7b990b,#7f990a,#839909,#879908,#8b9907,#8f9906,#939906,#979905,#999704,#999303,#998f02,#998b01,#998800,#998400,#998100,#997e00,#997b00,#997800,#997500,#997200)"></i><i style="left:1620px;width:304px;height:8px;top:268px;background:linear-gradient(90deg,#7c990b,#80990a,#84990a,#889909,#8c9908,#909907,#949906,#999905,#999505,#999104,#998e03,#998a02,#998601,#998300,#998000,#997d00,#997a00,#997700,#997400,#997100)"></i><i style="left:1620px;width:304px;height:8px;top:276px;background:linear-gradient(90deg,#7d990c,#81990b,#85990a,#89990a,#8e9909,#929908,#969907,#999806,#999405,#999004,#998c03,#998902,#998502,#998201,#997e00,#997b00,#997800,#997600,#997300,#997000)"></i><i style="left:1620px;width:304px;height:8px;top:284px;background:linear-gradient(90deg,#7f990d,#83990c,#87990b,#8b990a,#8f9909,#939909,#979908,#999607,#999206,#998f05,#998b04,#998703,#998402,#998001,#997d01,#997a00,#997700,#997400,#997200,#996f00)"></i><i style="left:1620px;width:304px;height:8px;top:292px;background:linear-gradient(90deg,#80990d,#84990d,#88990c,#8c990b,#90990a,#959909,#999908,#999507,#999106,#998d05,#998904,#998604,#998203,#997f02,#997c01,#997900,#997600,#997300,#997100,#996e00)"></i><i style="left:1620px;width:304px;height:8px;top:300px;background:linear-gradient(90deg,#81990e,#85990d,#8a990d,#8e990c,#92990b,#96990a,#999809,#999308,#999007,#998c06,#998805,#998504,#998103,#997e02,#997b02,#997801,#997500,#997200,#996f00,#996d00)"></i><i style="left:1620px;width:304px;height:8px;top:308px;background:linear-gradient(90deg,#83990f,#87990e,#8b990d,#8f990c,#93990c,#98990b,#99960a,#999209,#998e08,#998a07,#998706,#998305,#998004,#997d03,#997a02,#997701,#997401,#997100,#996e00,#996c00)"></i><i style="left:1620px;width:304px;height:8px;top:316px;background:linear-gradient(90deg,#849910,#88990f,#8c990e,#91990d,#95990c,#99990c,#99950a,#999109,#998d08,#998907,#998506,#998205,#997f04,#997b04,#997803,#997502,#997301,#997000,#996d00,#996b00)"></i><i style="left:1620px;width:304px;height:8px;top:324px;background:linear-gradient(90deg,#869910,#8a9910,#8e990f,#92990e,#96990d,#99970c,#99930b,#998f0a,#998b09,#998808,#998407,#998106,#997d05,#997a04,#997703,#997403,#997102,#996f01,#996c00,#996a00)"></i><i style="left:1620px;width:304px;height:8px;top:332px;background:linear-gradient(90deg,#879911,#8b9910,#8f9910,#94990f,#98990e,#99960d,#99920c,#998e0b,#998a09,#998608,#998307,#997f07,#997c06,#997905,#997604,#997303,#997002,#996e02,#996b01,#996900)"></i><i style="left:1620px;width:304px;height:8px;top:340px;background:linear-gradient(90deg,#889912,#8d9911,#919910,#959910,#99980f,#99940d,#99900c,#998c0b,#99880a,#998509,#998108,#997e07,#997b06,#997805,#997504,#997204,#996f03,#996d02,#996a01,#996801)"></i><i style="left:1620px;width:304px;height:8px;top:348px;background:linear-gradient(90deg,#8a9913,#8e9912,#929911,#979910,#99970f,#99930e,#998f0d,#998b0c,#99870b,#99840a,#998009,#997d08,#997a07,#997706,#997405,#997104,#996e03,#996b03,#996902,#996701)"></i><i style="left:1620px;width:304px;height:8px;top:356px;background:linear-gradient(90deg,#8b9914,#909913,#949912,#989911,#999510,#99910f,#998d0e,#99890c,#99860b,#99820a,#997f09,#997c08,#997807,#997506,#997306,#997005,#996d04,#996a03,#996802,#996502)"></i></div></div><div class="cl" style="clip-path:path('M1643.3 147.1 L1890.7 312.2 L1890.7 333.5 L1643.3 333.5 Z')"><div class="bl" style="filter:blur(4px)"><style></style><i style="left:1620px;width:304px;height:8px;top:100px;background:linear-gradient(90deg,#a7ff00,#adff00,#b2ff00,#b8ff00,#beff00,#c4ff00,#c9ff00,#cfff00,#d5ff00,#dbff00,#e2ff00,#e8ff00,#eeff00,#f4ff00,#fbff00,#fffd00,#fff700,#fff100,#ffeb00,#ffe500)"></i><i style="left:1620px;width:304px;height:8px;top:108px;background:linear-gradient(90deg,#a9ff00,#aeff00,#b4ff00,#baff00,#c0ff00,#c5ff00,#cbff00,#d1ff00,#d7ff00,#ddff00,#e4ff00,#eaff00,#f0ff00,#f7ff00,#fdff00,#fffb00,#fff400,#ffee00,#ffe900,#ffe300)"></i><i style="left:1620px;width:304px;height:8px;top:116px;background:linear-gradient(90deg,#abff00,#b0ff00,#b6ff00,#bcff00,#c2ff00,#c7ff00,#cdff00,#d3ff00,#d9ff00,#e0ff00,#e6ff00,#ecff00,#f2ff00,#f9ff00,#ffff00,#fff800,#fff200,#ffec00,#ffe700,#ffe100)"></i><i style="left:1620px;width:304px;height:8px;top:124px;background:linear-gradient(90deg,#acff00,#b2ff00,#b8ff00,#beff00,#c3ff00,#c9ff00,#cfff00,#d5ff00,#dcff00,#e2ff00,#e8ff00,#eeff00,#f5ff00,#fbff00,#fffc00,#fff600,#fff000,#ffea00,#ffe500,#ffdf00)"></i><i style="left:1620px;width:304px;height:8px;top:132px;background:linear-gradient(90deg,#aeff01,#b4ff00,#baff00,#bfff00,#c5ff00,#cbff00,#d1ff00,#d7ff00,#deff00,#e4ff00,#eaff00,#f1ff00,#f7ff00,#fdff00,#fffa00,#fff400,#ffee00,#ffe800,#ffe200,#ffdd00)"></i><i style="left:1620px;width:304px;height:8px;top:140px;background:linear-gradient(90deg,#b0ff02,#b6ff00,#bbff00,#c1ff00,#c7ff00,#cdff00,#d3ff00,#daff00,#e0ff00,#e6ff00,#ecff00,#f3ff00,#f9ff00,#fffe00,#fff800,#fff200,#ffec00,#ffe600,#ffe000,#ffdb00)"></i><i style="left:1620px;width:304px;height:8px;top:148px;background:linear-gradient(90deg,#b2ff03,#b7ff01,#bdff00,#c3ff00,#c9ff00,#cfff00,#d5ff00,#dcff00,#e2ff00,#e8ff00,#efff00,#f5ff00,#fcff00,#fffc00,#fff500,#ffef00,#ffe900,#ffe400,#ffde00,#ffd900)"></i><i style="left:1620px;width:304px;height:8px;top:156px;background:linear-gradient(90deg,#b3ff04,#b9ff02,#bfff01,#c5ff00,#cbff00,#d1ff00,#d7ff00,#deff00,#e4ff00,#eaff00,#f1ff00,#f7ff00,#feff00,#fff900,#fff300,#ffed00,#ffe700,#ffe200,#ffdc00,#ffd700)"></i><i style="left:1620px;width:304px;height:8px;top:164px;background:linear-gradient(90deg,#b5ff05,#bbff03,#c1ff02,#c7ff01,#cdff00,#d3ff00,#daff00,#e0ff00,#e6ff00,#edff00,#f3ff00,#faff00,#fffe00,#fff700,#fff100,#ffeb00,#ffe500,#ffe000,#ffda00,#ffd500)"></i><i style="left:1620px;width:304px;height:8px;top:172px;background:linear-gradient(90deg,#b7ff06,#bdff04,#c3ff03,#c9ff02,#cfff00,#d5ff00,#dcff00,#e2ff00,#e8ff00,#efff00,#f5ff00,#fcff00,#fffb00,#fff500,#ffef00,#ffe900,#ffe300,#ffde00,#ffd800,#ffd300)"></i><i style="left:1620px;width:304px;height:8px;top:180px;background:linear-gradient(90deg,#b9ff07,#bfff05,#c5ff04,#cbff03,#d1ff01,#d8ff00,#deff00,#e4ff00,#ebff00,#f1ff00,#f8ff00,#feff00,#fff900,#fff300,#ffec00,#ffe700,#ffe100,#ffdc00,#ffd600,#ffd100)"></i><i style="left:1620px;width:304px;height:8px;top:188px;background:linear-gradient(90deg,#bbff08,#c1ff06,#c7ff05,#cdff04,#d3ff02,#daff01,#e0ff00,#e6ff00,#edff00,#f4ff00,#faff00,#fffd00,#fff700,#fff000,#ffea00,#ffe400,#ffdf00,#ffda00,#ffd400,#ffcf00)"></i><i style="left:1620px;width:304px;height:8px;top:196px;background:linear-gradient(90deg,#bdff09,#c3ff07,#c9ff06,#cfff05,#d5ff03,#dcff02,#e2ff01,#e9ff00,#efff00,#f6ff00,#fdff00,#fffb00,#fff400,#ffee00,#ffe800,#ffe200,#ffdd00,#ffd700,#ffd200,#ffcd00)"></i><i style="left:1620px;width:304px;height:8px;top:204px;background:linear-gradient(90deg,#bfff0a,#c5ff08,#cbff07,#d1ff06,#d8ff04,#deff03,#e4ff02,#ebff00,#f2ff00,#f8ff00,#ffff00,#fff800,#fff200,#ffec00,#ffe600,#ffe000,#ffdb00,#ffd500,#ffd000,#ffcb00)"></i><i style="left:1620px;width:304px;height:8px;top:212px;background:linear-gradient(90deg,#c1ff0b,#c7ff09,#cdff08,#d3ff07,#daff05,#e0ff04,#e7ff03,#edff01,#f4ff00,#fbff00,#fffd00,#fff600,#fff000,#ffea00,#ffe400,#ffde00,#ffd900,#ffd300,#ffce00,#ffca00)"></i><i style="left:1620px;width:304px;height:8px;top:220px;background:linear-gradient(90deg,#c3ff0c,#c9ff0b,#cfff09,#d5ff08,#dcff07,#e2ff05,#e9ff04,#f0ff02,#f6ff01,#fdff00,#fffa00,#fff400,#ffed00,#ffe700,#ffe200,#ffdc00,#ffd700,#ffd100,#ffcc00,#ffc800)"></i><i style="left:1620px;width:304px;height:8px;top:228px;background:linear-gradient(90deg,#c5ff0d,#cbff0c,#d1ff0a,#d8ff09,#deff08,#e5ff06,#ebff05,#f2ff03,#f9ff02,#fffe01,#fff800,#fff100,#ffeb00,#ffe500,#ffdf00,#ffda00,#ffd500,#ffcf00,#ffcb00,#ffc600)"></i><i style="left:1620px;width:304px;height:8px;top:236px;background:linear-gradient(90deg,#c7ff0e,#cdff0d,#d3ff0b,#daff0a,#e0ff09,#e7ff07,#eeff06,#f4ff05,#fbff03,#fffc02,#fff500,#ffef00,#ffe900,#ffe300,#ffdd00,#ffd800,#ffd300,#ffce00,#ffc900,#ffc400)"></i><i style="left:1620px;width:304px;height:8px;top:244px;background:linear-gradient(90deg,#c9ff0f,#cfff0e,#d5ff0d,#dcff0b,#e3ff0a,#e9ff09,#f0ff07,#f7ff06,#feff04,#fffa03,#fff301,#ffed00,#ffe700,#ffe100,#ffdb00,#ffd600,#ffd100,#ffcc00,#ffc700,#ffc200)"></i><i style="left:1620px;width:304px;height:8px;top:252px;background:linear-gradient(90deg,#cbff10,#d1ff0f,#d8ff0e,#deff0c,#e5ff0b,#ecff0a,#f2ff08,#f9ff07,#fffe05,#fff704,#fff102,#ffea01,#ffe400,#ffdf00,#ffd900,#ffd400,#ffcf00,#ffca00,#ffc500,#ffc000)"></i><i style="left:1620px;width:304px;height:8px;top:260px;background:linear-gradient(90deg,#cdff12,#d3ff10,#daff0f,#e0ff0e,#e7ff0c,#eeff0b,#f5ff09,#fcff08,#fffb06,#fff505,#ffee03,#ffe802,#ffe201,#ffdc00,#ffd700,#ffd200,#ffcd00,#ffc800,#ffc300,#ffbe00)"></i><i style="left:1620px;width:304px;height:8px;top:268px;background:linear-gradient(90deg,#cfff13,#d5ff11,#dcff10,#e3ff0f,#e9ff0d,#f0ff0c,#f7ff0b,#feff09,#fff908,#fff206,#ffec04,#ffe603,#ffe002,#ffda00,#ffd500,#ffd000,#ffcb00,#ffc600,#ffc100,#ffbd00)"></i><i style="left:1620px;width:304px;height:8px;top:276px;background:linear-gradient(90deg,#d1ff14,#d8ff13,#deff11,#e5ff10,#ecff0f,#f3ff0d,#faff0c,#fffd0a,#fff609,#fff007,#ffea05,#ffe404,#ffde03,#ffd801,#ffd300,#ffce00,#ffc900,#ffc400,#ffbf00,#ffbb00)"></i><i style="left:1620px;width:304px;height:8px;top:284px;background:linear-gradient(90deg,#d3ff15,#daff14,#e1ff12,#e7ff11,#eeff10,#f5ff0e,#fcff0d,#fffb0b,#fff40a,#ffee08,#ffe706,#ffe105,#ffdc04,#ffd602,#ffd101,#ffcc00,#ffc700,#ffc200,#ffbd00,#ffb900)"></i><i style="left:1620px;width:304px;height:8px;top:292px;background:linear-gradient(90deg,#d5ff16,#dcff15,#e3ff14,#eaff12,#f1ff11,#f8ff10,#ffff0e,#fff80c,#fff20b,#ffeb09,#ffe507,#ffdf06,#ffd905,#ffd403,#ffcf02,#ffca01,#ffc500,#ffc000,#ffbc00,#ffb700)"></i><i style="left:1620px;width:304px;height:8px;top:300px;background:linear-gradient(90deg,#d8ff18,#deff16,#e5ff15,#ecff14,#f3ff12,#faff11,#fffd0f,#fff60d,#ffef0c,#ffe90a,#ffe308,#ffdd07,#ffd706,#ffd204,#ffcd03,#ffc801,#ffc300,#ffbe00,#ffba00,#ffb500)"></i><i style="left:1620px;width:304px;height:8px;top:308px;background:linear-gradient(90deg,#daff19,#e1ff17,#e8ff16,#efff15,#f6ff13,#fdff12,#fffa10,#fff30e,#ffed0d,#ffe70b,#ffe109,#ffdb08,#ffd506,#ffd005,#ffcb04,#ffc602,#ffc101,#ffbc00,#ffb800,#ffb400)"></i><i style="left:1620px;width:304px;height:8px;top:316px;background:linear-gradient(90deg,#dcff1a,#e3ff19,#eaff17,#f1ff16,#f8ff15,#ffff13,#fff811,#fff110,#ffea0e,#ffe40c,#ffde0a,#ffd909,#ffd307,#ffce06,#ffc905,#ffc403,#ffbf02,#ffba01,#ffb600,#ffb200)"></i><i style="left:1620px;width:304px;height:8px;top:324px;background:linear-gradient(90deg,#dfff1b,#e5ff1a,#ecff19,#f4ff17,#fbff16,#fffc14,#fff512,#ffee11,#ffe80f,#ffe20d,#ffdc0b,#ffd60a,#ffd108,#ffcc07,#ffc706,#ffc204,#ffbd03,#ffb902,#ffb400,#ffb000)"></i><i style="left:1620px;width:304px;height:8px;top:332px;background:linear-gradient(90deg,#e1ff1d,#e8ff1b,#efff1a,#f6ff19,#fdff17,#fffa15,#fff313,#ffec12,#ffe610,#ffe00e,#ffda0c,#ffd40b,#ffcf09,#ffca08,#ffc506,#ffc005,#ffbb04,#ffb703,#ffb201,#ffae00)"></i><i style="left:1620px;width:304px;height:8px;top:340px;background:linear-gradient(90deg,#e3ff1e,#eaff1d,#f1ff1b,#f9ff1a,#fffe18,#fff716,#fff014,#ffea13,#ffe311,#ffdd0f,#ffd80d,#ffd20c,#ffcd0a,#ffc809,#ffc307,#ffbe06,#ffb905,#ffb503,#ffb102,#ffad01)"></i><i style="left:1620px;width:304px;height:8px;top:348px;background:linear-gradient(90deg,#e6ff1f,#edff1e,#f4ff1d,#fbff1b,#fffb1a,#fff417,#ffee15,#ffe714,#ffe112,#ffdb10,#ffd50e,#ffd00d,#ffcb0b,#ffc60a,#ffc108,#ffbc07,#ffb806,#ffb304,#ffaf03,#ffab02)"></i><i style="left:1620px;width:304px;height:8px;top:356px;background:linear-gradient(90deg,#e8ff21,#efff1f,#f7ff1e,#feff1d,#fff91b,#fff218,#ffeb17,#ffe515,#ffdf13,#ffd911,#ffd30f,#ffce0e,#ffc90c,#ffc40b,#ffbf09,#ffba08,#ffb607,#ffb105,#ffad04,#ffa903)"></i></div></div>
<svg width="1920" height="1044" viewBox="0 0 1920 1044">
<path d="M1160.4 116.4V678H1898.8V116.4Z" fill="none" stroke="#a3a3a3" stroke-width="1.6"/>
<rect x="1154.4" y="677.2" width="6" height="1.6" fill="#a3a3a3"/>
<text x="1153" y="683.5" font-size="16" fill="#dcdcdc" text-anchor="end">0</text>
<rect x="1159.6" y="678" width="1.6" height="6" fill="#a3a3a3"/>
<text x="1160.4" y="702.5" font-size="15.5" fill="#dcdcdc" text-anchor="middle">0</text>
<rect x="1154.4" y="610.5" width="6" height="1.6" fill="#a3a3a3"/>
<text x="1153" y="616.8" font-size="16" fill="#dcdcdc" text-anchor="end">0,1</text>
<rect x="1247.3" y="678" width="1.6" height="6" fill="#a3a3a3"/>
<text x="1248.1" y="702.5" font-size="15.5" fill="#dcdcdc" text-anchor="middle">0,1</text>
<rect x="1154.4" y="543.7" width="6" height="1.6" fill="#a3a3a3"/>
<text x="1153" y="550.0" font-size="16" fill="#dcdcdc" text-anchor="end">0,2</text>
<rect x="1334.9" y="678" width="1.6" height="6" fill="#a3a3a3"/>
<text x="1335.7" y="702.5" font-size="15.5" fill="#dcdcdc" text-anchor="middle">0,2</text>
<rect x="1154.4" y="477.0" width="6" height="1.6" fill="#a3a3a3"/>
<text x="1153" y="483.3" font-size="16" fill="#dcdcdc" text-anchor="end">0,3</text>
<rect x="1422.6" y="678" width="1.6" height="6" fill="#a3a3a3"/>
<text x="1423.4" y="702.5" font-size="15.5" fill="#dcdcdc" text-anchor="middle">0,3</text>
<rect x="1154.4" y="410.2" width="6" height="1.6" fill="#a3a3a3"/>
<text x="1153" y="416.5" font-size="16" fill="#dcdcdc" text-anchor="end">0,4</text>
<rect x="1510.2" y="678" width="1.6" height="6" fill="#a3a3a3"/>
<text x="1511.0" y="702.5" font-size="15.5" fill="#dcdcdc" text-anchor="middle">0,4</text>
<rect x="1154.4" y="343.5" width="6" height="1.6" fill="#a3a3a3"/>
<text x="1153" y="349.8" font-size="16" fill="#dcdcdc" text-anchor="end">0,5</text>
<rect x="1597.9" y="678" width="1.6" height="6" fill="#a3a3a3"/>
<text x="1598.7" y="702.5" font-size="15.5" fill="#dcdcdc" text-anchor="middle">0,5</text>
<rect x="1154.4" y="276.8" width="6" height="1.6" fill="#a3a3a3"/>
<text x="1153" y="283.1" font-size="16" fill="#dcdcdc" text-anchor="end">0,6</text>
<rect x="1685.5" y="678" width="1.6" height="6" fill="#a3a3a3"/>
<text x="1686.3" y="702.5" font-size="15.5" fill="#dcdcdc" text-anchor="middle">0,6</text>
<rect x="1154.4" y="210.0" width="6" height="1.6" fill="#a3a3a3"/>
<text x="1153" y="216.3" font-size="16" fill="#dcdcdc" text-anchor="end">0,7</text>
<rect x="1773.2" y="678" width="1.6" height="6" fill="#a3a3a3"/>
<text x="1774.0" y="702.5" font-size="15.5" fill="#dcdcdc" text-anchor="middle">0,7</text>
<rect x="1154.4" y="143.3" width="6" height="1.6" fill="#a3a3a3"/>
<text x="1153" y="149.6" font-size="16" fill="#dcdcdc" text-anchor="end">0,8</text>
<rect x="1860.8" y="678" width="1.6" height="6" fill="#a3a3a3"/>
<text x="1861.6" y="702.5" font-size="15.5" fill="#dcdcdc" text-anchor="middle">0,8</text>
<rect x="1424.7" y="412.8" width="14.6" height="14.6" fill="none" stroke="#fff" stroke-width="2"/>
<rect x="1423.2" y="377.5" width="14.6" height="14.6" fill="none" stroke="#fff" stroke-width="2"/>
<rect x="1420.1" y="342.9" width="14.6" height="14.6" fill="none" stroke="#fff" stroke-width="2"/>
<rect x="1418.3" y="307.7" width="14.6" height="14.6" fill="none" stroke="#fff" stroke-width="2"/>
<rect x="1415.2" y="268.5" width="14.6" height="14.6" fill="none" stroke="#fff" stroke-width="2"/>
<rect x="1446.3" y="425.6" width="14.6" height="14.6" fill="none" stroke="#fff" stroke-width="2"/>
<rect x="1465.0" y="400.4" width="14.6" height="14.6" fill="none" stroke="#fff" stroke-width="2"/>
<rect x="1483.5" y="378.6" width="14.6" height="14.6" fill="none" stroke="#fff" stroke-width="2"/>
<rect x="1500.7" y="356.8" width="14.6" height="14.6" fill="none" stroke="#fff" stroke-width="2"/>
<rect x="1520.5" y="332.1" width="14.6" height="14.6" fill="none" stroke="#fff" stroke-width="2"/>
<rect x="1411.7" y="450.4" width="14.6" height="14.6" fill="none" stroke="#fff" stroke-width="2"/>
<rect x="1396.7" y="450.4" width="14.6" height="14.6" fill="none" stroke="#fff" stroke-width="2"/>
<rect x="1381.7" y="450.4" width="14.6" height="14.6" fill="none" stroke="#fff" stroke-width="2"/>
<rect x="1365.9" y="450.4" width="14.6" height="14.6" fill="none" stroke="#fff" stroke-width="2"/>
<rect x="1350.0" y="450.4" width="14.6" height="14.6" fill="none" stroke="#fff" stroke-width="2"/>
<rect x="1398.0" y="486.0" width="14.6" height="14.6" fill="none" stroke="#fff" stroke-width="2"/>
<rect x="1370.0" y="521.5" width="14.6" height="14.6" fill="none" stroke="#fff" stroke-width="2"/>
<rect x="1342.5" y="556.1" width="14.6" height="14.6" fill="none" stroke="#fff" stroke-width="2"/>
<rect x="1314.7" y="590.0" width="14.6" height="14.6" fill="none" stroke="#fff" stroke-width="2"/>
<rect x="1283.2" y="628.6" width="14.6" height="14.6" fill="none" stroke="#fff" stroke-width="2"/>
<rect x="1429.0" y="473.5" width="14.6" height="14.6" fill="none" stroke="#fff" stroke-width="2"/>
<rect x="1430.6" y="498.4" width="14.6" height="14.6" fill="none" stroke="#fff" stroke-width="2"/>
<rect x="1430.6" y="518.6" width="14.6" height="14.6" fill="none" stroke="#fff" stroke-width="2"/>
<rect x="1432.1" y="542.0" width="14.6" height="14.6" fill="none" stroke="#fff" stroke-width="2"/>
<rect x="1433.9" y="566.4" width="14.6" height="14.6" fill="none" stroke="#fff" stroke-width="2"/>
<rect x="1483.8" y="448.4" width="14.6" height="14.6" fill="none" stroke="#fff" stroke-width="2"/>
<rect x="1542.6" y="448.4" width="14.6" height="14.6" fill="none" stroke="#fff" stroke-width="2"/>
<rect x="1595.1" y="448.4" width="14.6" height="14.6" fill="none" stroke="#fff" stroke-width="2"/>
<rect x="1651.1" y="448.4" width="14.6" height="14.6" fill="none" stroke="#fff" stroke-width="2"/>
<rect x="1714.6" y="448.4" width="14.6" height="14.6" fill="none" stroke="#fff" stroke-width="2"/>
<rect x="1427.5" y="450.4" width="14.6" height="14.6" fill="none" stroke="#111" stroke-width="2"/>
<circle cx="1436.6" cy="415.7" r="4.7" fill="#a0b8a0" stroke="#111" stroke-width="1.7"/>
<circle cx="1431.8" cy="381.5" r="4.7" fill="#8cb48c" stroke="#111" stroke-width="1.7"/>
<circle cx="1427.2" cy="345.8" r="4.7" fill="#6cb06c" stroke="#111" stroke-width="1.7"/>
<circle cx="1422.3" cy="308.6" r="4.7" fill="#5aac5a" stroke="#111" stroke-width="1.7"/>
<circle cx="1416.4" cy="271.4" r="4.7" fill="#10a810" stroke="#111" stroke-width="1.7"/>
<circle cx="1461.3" cy="428" r="4.7" fill="#b0b098" stroke="#111" stroke-width="1.7"/>
<circle cx="1479.8" cy="404.9" r="4.7" fill="#b8b888" stroke="#111" stroke-width="1.7"/>
<circle cx="1498.3" cy="384.8" r="4.7" fill="#c0c070" stroke="#111" stroke-width="1.7"/>
<circle cx="1515.5" cy="362.8" r="4.7" fill="#c0c050" stroke="#111" stroke-width="1.7"/>
<circle cx="1534.5" cy="341" r="4.7" fill="#c0c000" stroke="#111" stroke-width="1.7"/>
<circle cx="1424.2" cy="451" r="4.7" fill="#a8bcbc" stroke="#111" stroke-width="1.7"/>
<circle cx="1407" cy="451" r="4.7" fill="#90b4b4" stroke="#111" stroke-width="1.7"/>
<circle cx="1390" cy="451" r="4.7" fill="#78b0b0" stroke="#111" stroke-width="1.7"/>
<circle cx="1371.3" cy="449.9" r="4.7" fill="#5ab0b0" stroke="#111" stroke-width="1.7"/>
<circle cx="1353" cy="449.9" r="4.7" fill="#10b0b0" stroke="#111" stroke-width="1.7"/>
<circle cx="1411.4" cy="486.9" r="4.7" fill="#a0a0b8" stroke="#111" stroke-width="1.7"/>
<circle cx="1382.1" cy="522.8" r="4.7" fill="#8888b8" stroke="#111" stroke-width="1.7"/>
<circle cx="1352.8" cy="558.5" r="4.7" fill="#7070b8" stroke="#111" stroke-width="1.7"/>
<circle cx="1318.5" cy="598.6" r="4.7" fill="#5050c0" stroke="#111" stroke-width="1.7"/>
<circle cx="1284.3" cy="637.6" r="4.7" fill="#1010c0" stroke="#111" stroke-width="1.7"/>
<circle cx="1445.8" cy="476.4" r="4.7" fill="#b8a0b8" stroke="#111" stroke-width="1.7"/>
<circle cx="1448.9" cy="499.5" r="4.7" fill="#c088c0" stroke="#111" stroke-width="1.7"/>
<circle cx="1451.8" cy="518.2" r="4.7" fill="#c070c0" stroke="#111" stroke-width="1.7"/>
<circle cx="1455" cy="542.9" r="4.7" fill="#c050c0" stroke="#111" stroke-width="1.7"/>
<circle cx="1458.4" cy="566.2" r="4.7" fill="#c010c0" stroke="#111" stroke-width="1.7"/>
<circle cx="1503.5" cy="453.1" r="4.7" fill="#b08888" stroke="#111" stroke-width="1.7"/>
<circle cx="1564.1" cy="453.1" r="4.7" fill="#b06868" stroke="#111" stroke-width="1.7"/>
<circle cx="1618" cy="453.1" r="4.7" fill="#b05858" stroke="#111" stroke-width="1.7"/>
<circle cx="1673.9" cy="453.1" r="4.7" fill="#b84040" stroke="#111" stroke-width="1.7"/>
<circle cx="1725.2" cy="454.4" r="4.7" fill="#c00000" stroke="#111" stroke-width="1.7"/>
<circle cx="1440.1" cy="451.5" r="4.7" fill="#fff" stroke="#111" stroke-width="1.7"/>
<rect x="1640" y="122" width="254" height="215" fill="none" stroke="#222" stroke-width="3"/>
<rect x="1642.3" y="124" width="249.4" height="210.5" fill="none" stroke="#8c8c8c" stroke-width="2"/>
<rect x="1757.5" y="220.5" width="15.2" height="15.2" fill="none" stroke="#fff" stroke-width="2"/>
<circle cx="1805.3" cy="238" r="4.9" fill="#c0c000" stroke="#111" stroke-width="1.7"/>
</svg>
</body></html>
